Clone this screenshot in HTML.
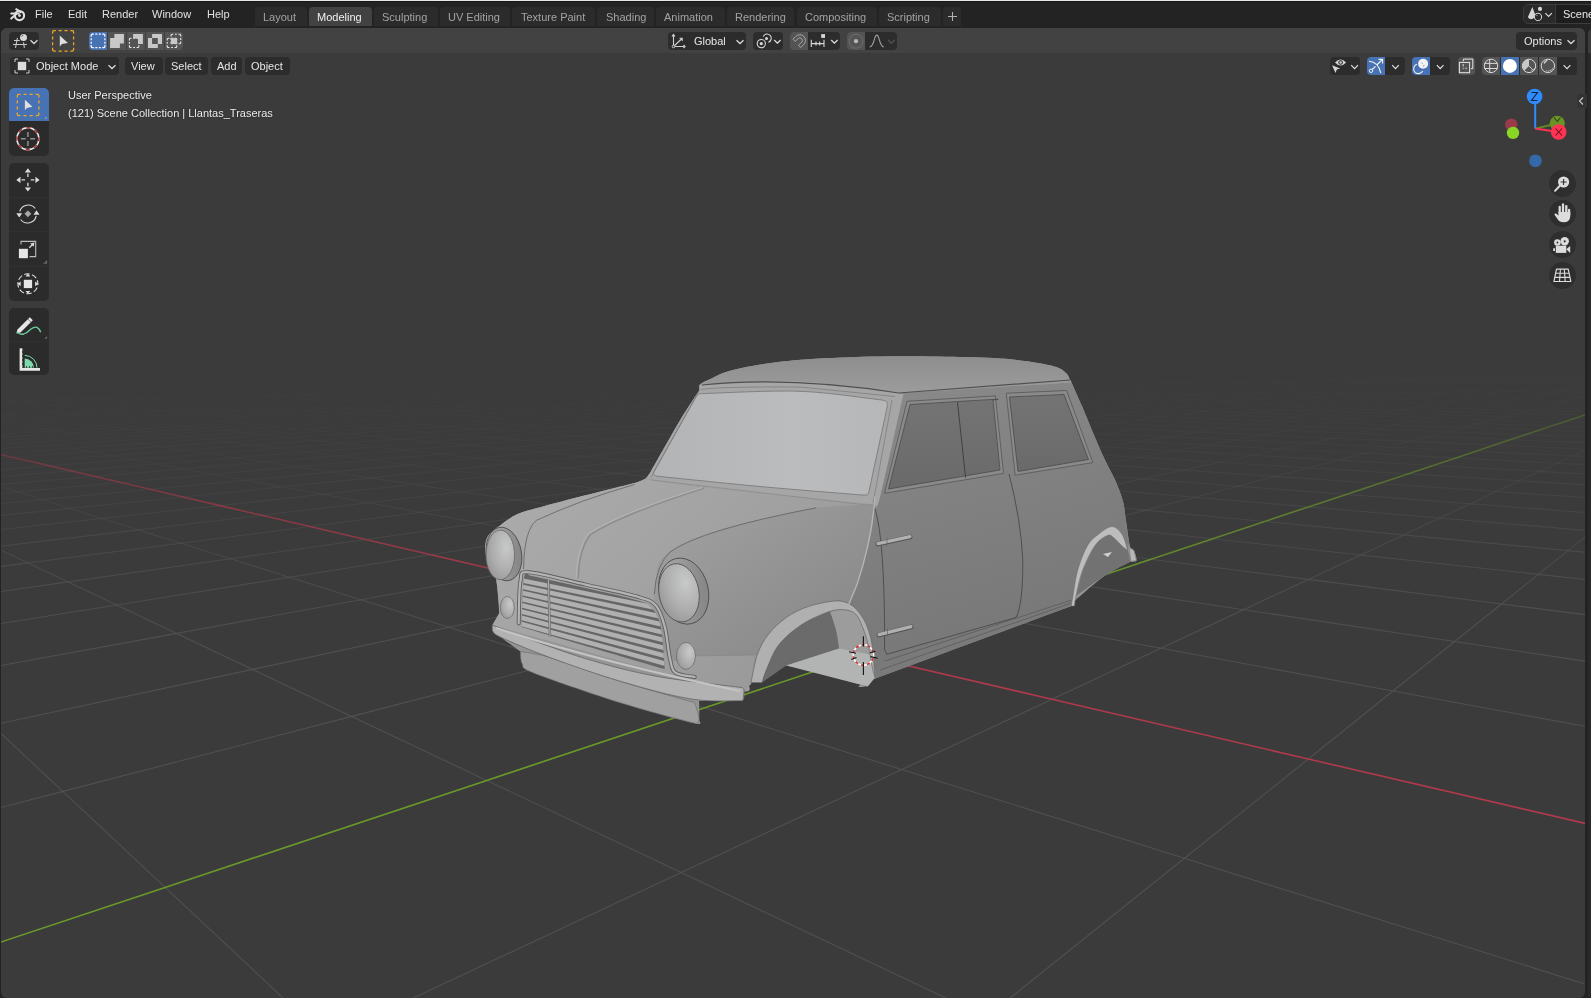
<!DOCTYPE html>
<html><head><meta charset="utf-8"><style>
*{box-sizing:border-box}
html,body{margin:0;padding:0}
body{width:1591px;height:998px;background:#232323;position:relative;overflow:hidden;font-family:"Liberation Sans",sans-serif;font-size:11px;color:#e5e5e5}
.a{position:absolute}
.t{position:absolute;white-space:nowrap;line-height:13px;height:13px;will-change:transform}
.btn{position:absolute;background:#2c2c2c;border-radius:4px}
.tog{position:absolute;background:#545454}
.blue{position:absolute;background:#4772b3}
.tab{position:absolute;top:7px;height:19px;background:#2b2b2b;border-radius:4px 4px 0 0;color:#a3a3a3}
.tab span{position:absolute;top:4px;line-height:13px;white-space:nowrap;will-change:transform}
.tb{position:absolute;left:9px;width:40px;background:#2b2b2b;border-radius:5px}
.nav{position:absolute;width:27px;height:27px;border-radius:50%;background:#2e2e2e}
</style></head><body>
<div class="a" style="left:0;top:0;width:1591px;height:1px;background:#e8e8e8"></div>
<div class="a" style="left:0;top:1px;width:1591px;height:1px;background:#171717"></div>
<svg class="a" style="left:9px;top:6px" width="20" height="18" viewBox="0 0 20 18">
<circle cx="10.5" cy="9.6" r="4.6" stroke="#e0e0e0" stroke-width="2.1" fill="none"/>
<circle cx="10.5" cy="9.6" r="1.4" fill="#e0e0e0"/>
<path d="M2.2 7.4H9.8M7.2 3.2L11.8 6.2M2.2 12.6L7.6 7.8" stroke="#e0e0e0" stroke-width="2" stroke-linecap="round" fill="none"/>
</svg>
<div class="t" style="left:35px;top:7.7px;color:#e0e0e0;">File</div>
<div class="t" style="left:68px;top:7.7px;color:#e0e0e0;">Edit</div>
<div class="t" style="left:102px;top:7.7px;color:#e0e0e0;">Render</div>
<div class="t" style="left:152px;top:7.7px;color:#e0e0e0;">Window</div>
<div class="t" style="left:207px;top:7.7px;color:#e0e0e0;">Help</div>
<div class="tab" style="left:255px;width:52px;"><span style="left:8px">Layout</span></div>
<div class="tab" style="left:309px;width:63px;background:#424242;color:#f0f0f0;"><span style="left:8px">Modeling</span></div>
<div class="tab" style="left:374px;width:64px;"><span style="left:8px">Sculpting</span></div>
<div class="tab" style="left:440px;width:70px;"><span style="left:8px">UV Editing</span></div>
<div class="tab" style="left:512px;width:83px;"><span style="left:8.5px">Texture Paint</span></div>
<div class="tab" style="left:597px;width:57px;"><span style="left:8.5px">Shading</span></div>
<div class="tab" style="left:656px;width:69px;"><span style="left:8px">Animation</span></div>
<div class="tab" style="left:727px;width:67px;"><span style="left:8px">Rendering</span></div>
<div class="tab" style="left:797px;width:80px;"><span style="left:8px">Compositing</span></div>
<div class="tab" style="left:879px;width:62px;"><span style="left:8px">Scripting</span></div>
<div class="tab" style="left:943px;width:18px"></div>
<svg class="a" style="left:946px;top:10px" width="13" height="13" viewBox="0 0 13 13"><path d="M6.5 2V11M2 6.5H11" stroke="#b0b0b0" stroke-width="1.1"/></svg>
<div class="a" style="left:1523.3px;top:4.1px;width:80px;height:19.5px;border:1px solid #3c3c3c;border-radius:5px;background:#2a2a2a"></div>
<div class="a" style="left:1554.5px;top:5.1px;width:40px;height:17.5px;background:#1e1e1e;border-left:1px solid #3c3c3c"></div>
<svg class="a" style="left:1520px;top:0" width="40" height="28" viewBox="1520 0 40 28">
<path d="M1532.4 7L1527.9 17.1Q1528.5 19 1531 19.2Q1533 19.2 1534.2 17.6Q1534.2 16 1535.4 15.2Z" fill="#d4d4d4"/>
<circle cx="1540" cy="8.9" r="2.1" fill="#d4d4d4"/>
<circle cx="1538" cy="16.9" r="3.6" stroke="#d4d4d4" stroke-width="1.05" fill="#2a2a2a"/>
<path d="M1536.4 16L1537.4 15" stroke="#d4d4d4" stroke-width="0.8"/>
<path d="M1545.3 13.2L1548.6 16.5L1551.9 13.2" stroke="#d8d8d8" stroke-width="1.2" fill="none"/>
</svg>
<div class="t" style="left:1562.7px;top:7.7px;color:#e8e8e8;">Scene</div>
<div class="a" style="left:1588px;top:28px;width:10px;height:969px;background:#2a2a2a;border-radius:5px 0 0 0"></div>
<div class="a" style="left:1588px;top:29px;width:10px;height:24px;background:#3d3d3d;border-radius:5px 0 0 0"></div>
<div class="a" style="left:1px;top:28px;width:1584px;height:970px;border-radius:6px;overflow:hidden;background:#3b3b3b">
<svg class="a" style="left:-1px;top:-28px" width="1591" height="998" viewBox="0 0 1591 998">
<path d="M-24.1 398.0L9.5 396.8M-17.5 398.7L16.4 397.4M16.4 397.4L49.2 396.1M23.7 398.0L56.9 396.7M56.9 396.7L88.9 395.5M64.8 397.3L97.2 396.1M97.2 396.1L128.4 394.9M105.8 396.6L137.4 395.4M137.4 395.4L167.9 394.2M146.7 396.0L177.6 394.8M177.6 394.8L207.4 393.6M187.6 395.3L217.7 394.1M228.4 394.7L257.7 393.4M269.1 394.0L297.6 392.8M309.7 393.3L337.5 392.2M350.2 392.7L377.2 391.5M363.4 393.2L390.7 392.0M390.7 392.0L416.9 390.9M404.6 392.5L431.0 391.3M431.0 391.3L456.6 390.2M445.6 391.9L471.3 390.7M471.3 390.7L496.1 389.6M486.6 391.2L511.5 390.0M511.5 390.0L535.5 388.9M527.5 390.5L551.7 389.4M551.7 389.4L574.9 388.3M568.3 389.9L591.7 388.7M591.7 388.7L614.2 387.6M609.1 389.2L631.7 388.1M631.7 388.1L653.5 387.0M649.7 388.5L671.5 387.4M671.5 387.4L692.6 386.4M690.3 387.9L711.3 386.8M711.3 386.8L731.7 385.7M730.8 387.2L751.1 386.1M751.1 386.1L770.7 385.1M771.2 386.5L790.7 385.5M790.7 385.5L809.6 384.5M811.5 385.9L830.3 384.8M830.3 384.8L848.4 383.8M851.7 385.2L869.8 384.2M869.8 384.2L887.2 383.2M891.9 384.6L909.2 383.6M909.2 383.6L925.9 382.6M931.9 383.9L948.5 382.9M971.9 383.3L987.8 382.3M1011.8 382.6L1026.9 381.6M1051.7 382.0L1066.0 381.0M1077.3 382.3L1091.4 381.3M1091.4 381.3L1105.1 380.4M1117.7 381.7L1131.1 380.7M1131.1 380.7L1144.0 379.7M1158.1 381.0L1170.7 380.0M1170.7 380.0L1182.9 379.1M1198.3 380.3L1210.2 379.4M1210.2 379.4L1221.6 378.5M1238.5 379.7L1249.6 378.7M1249.6 378.7L1260.4 377.8M1278.6 379.0L1289.0 378.1M1289.0 378.1L1299.0 377.2M1318.6 378.4L1328.3 377.5M1328.3 377.5L1337.5 376.6M1358.6 377.7L1367.5 376.8M1367.5 376.8L1376.0 375.9M1398.4 377.1L1406.6 376.2M1406.6 376.2L1414.4 375.3M1438.2 376.4L1445.6 375.5M1445.6 375.5L1452.8 374.7M1477.9 375.8L1484.6 374.9M1484.6 374.9L1491.0 374.1M1517.5 375.1L1523.5 374.3M1523.5 374.3L1529.2 373.5M1557.0 374.5L1562.3 373.6M1562.3 373.6L1567.3 372.8M1596.5 373.8L1601.0 373.0M9.5 396.8L16.4 397.4M16.4 397.4L23.7 398.0M49.2 396.1L56.9 396.7M56.9 396.7L64.8 397.3M88.9 395.5L97.2 396.1M97.2 396.1L105.8 396.6M128.4 394.9L137.4 395.4M137.4 395.4L146.7 396.0M167.9 394.2L177.6 394.8M177.6 394.8L187.6 395.3M207.4 393.6L217.7 394.1M217.7 394.1L228.4 394.7M257.7 393.4L269.1 394.0M297.6 392.8L309.7 393.3M337.5 392.2L350.2 392.7M350.2 392.7L363.4 393.2M377.2 391.5L390.7 392.0M390.7 392.0L404.6 392.5M416.9 390.9L431.0 391.3M431.0 391.3L445.6 391.9M456.6 390.2L471.3 390.7M471.3 390.7L486.6 391.2M496.1 389.6L511.5 390.0M511.5 390.0L527.5 390.5M535.5 388.9L551.7 389.4M551.7 389.4L568.3 389.9M574.9 388.3L591.7 388.7M591.7 388.7L609.1 389.2M614.2 387.6L631.7 388.1M631.7 388.1L649.7 388.5M653.5 387.0L671.5 387.4M671.5 387.4L690.3 387.9M692.6 386.4L711.3 386.8M711.3 386.8L730.8 387.2M731.7 385.7L751.1 386.1M751.1 386.1L771.2 386.5M770.7 385.1L790.7 385.5M790.7 385.5L811.5 385.9M809.6 384.5L830.3 384.8M830.3 384.8L851.7 385.2M848.4 383.8L869.8 384.2M869.8 384.2L891.9 384.6M887.2 383.2L909.2 383.6M909.2 383.6L931.9 383.9M948.5 382.9L971.9 383.3M987.8 382.3L1011.8 382.6M1026.9 381.6L1051.7 382.0M1066.0 381.0L1091.4 381.3M1091.4 381.3L1117.7 381.7M1105.1 380.4L1131.1 380.7M1131.1 380.7L1158.1 381.0M1144.0 379.7L1170.7 380.0M1170.7 380.0L1198.3 380.3M1182.9 379.1L1210.2 379.4M1210.2 379.4L1238.5 379.7M1221.6 378.5L1249.6 378.7M1249.6 378.7L1278.6 379.0M1260.4 377.8L1289.0 378.1M1289.0 378.1L1318.6 378.4M1299.0 377.2L1328.3 377.5M1328.3 377.5L1358.6 377.7M1337.5 376.6L1367.5 376.8M1367.5 376.8L1398.4 377.1M1376.0 375.9L1406.6 376.2M1406.6 376.2L1438.2 376.4M1414.4 375.3L1445.6 375.5M1445.6 375.5L1477.9 375.8M1452.8 374.7L1484.6 374.9M1484.6 374.9L1517.5 375.1M1491.0 374.1L1523.5 374.3M1523.5 374.3L1557.0 374.5M1529.2 373.5L1562.3 373.6M1562.3 373.6L1596.5 373.8M1567.3 372.8L1601.0 373.0" stroke="#505050" stroke-opacity="0.00" stroke-width="1.1" fill="none"/>
<path d="M-10.8 399.3L23.7 398.0M-40.1 401.4L-3.8 400.0M-3.8 400.0L31.1 398.6M31.1 398.6L64.8 397.3M-33.4 402.1L3.4 400.7M3.4 400.7L38.9 399.3M38.9 399.3L73.0 397.9M73.0 397.9L105.8 396.6M-26.5 402.9L10.9 401.4M10.9 401.4L46.9 400.0M46.9 400.0L81.4 398.6M81.4 398.6L114.7 397.3M114.7 397.3L146.7 396.0M-19.2 403.7L18.7 402.1M18.7 402.1L55.2 400.7M55.2 400.7L90.2 399.2M90.2 399.2L123.9 397.9M123.9 397.9L156.4 396.6M156.4 396.6L187.6 395.3M-11.7 404.5L26.9 402.9M26.9 402.9L63.9 401.4M63.9 401.4L99.4 399.9M99.4 399.9L133.5 398.5M133.5 398.5L166.4 397.2M166.4 397.2L197.9 395.9M197.9 395.9L228.4 394.7M-44.8 407.1L-3.9 405.4M-3.9 405.4L35.3 403.7M35.3 403.7L72.8 402.2M72.8 402.2L108.9 400.7M108.9 400.7L143.5 399.2M143.5 399.2L176.7 397.8M176.7 397.8L208.7 396.5M208.7 396.5L239.4 395.2M239.4 395.2L269.1 394.0M-37.3 408.0L4.3 406.2M4.3 406.2L44.1 404.6M44.1 404.6L82.2 403.0M82.2 403.0L118.7 401.4M118.7 401.4L153.8 399.9M153.8 399.9L187.5 398.5M187.5 398.5L219.8 397.1M219.8 397.1L250.9 395.8M250.9 395.8L280.8 394.5M280.8 394.5L309.7 393.3M-29.5 409.0L12.8 407.2M12.8 407.2L53.2 405.4M53.2 405.4L91.9 403.8M91.9 403.8L129.0 402.2M129.0 402.2L164.5 400.7M164.5 400.7L198.6 399.2M198.6 399.2L231.3 397.8M231.3 397.8L262.8 396.4M262.8 396.4L293.0 395.1M293.0 395.1L322.2 393.9M322.2 393.9L350.2 392.7M-21.4 410.0L21.7 408.2M21.7 408.2L62.8 406.4M62.8 406.4L102.1 404.6M102.1 404.6L139.7 403.0M139.7 403.0L175.7 401.4M175.7 401.4L210.2 399.9M210.2 399.9L243.3 398.5M243.3 398.5L275.1 397.1M275.1 397.1L305.7 395.7M305.7 395.7L335.1 394.4M335.1 394.4L363.4 393.2M-12.9 411.1L30.9 409.2M30.9 409.2L72.7 407.3M72.7 407.3L112.6 405.5M112.6 405.5L150.8 403.8M150.8 403.8L187.3 402.2M187.3 402.2L222.2 400.6M222.2 400.6L255.8 399.2M255.8 399.2L287.9 397.7M287.9 397.7L318.8 396.3M318.8 396.3L348.5 395.0M348.5 395.0L377.1 393.8M377.1 393.8L404.6 392.5M40.6 410.2L83.1 408.3M83.1 408.3L123.6 406.5M123.6 406.5L162.4 404.7M162.4 404.7L199.4 403.0M199.4 403.0L234.8 401.4M234.8 401.4L268.7 399.9M268.7 399.9L301.2 398.4M301.2 398.4L332.5 397.0M332.5 397.0L362.4 395.6M362.4 395.6L391.2 394.3M391.2 394.3L419.0 393.1M419.0 393.1L445.6 391.9M94.0 409.3L135.2 407.4M135.2 407.4L174.5 405.6M174.5 405.6L212.0 403.9M212.0 403.9L247.9 402.2M247.9 402.2L282.2 400.6M282.2 400.6L315.1 399.1M315.1 399.1L346.6 397.7M346.6 397.7L376.9 396.3M376.9 396.3L405.9 394.9M405.9 394.9L433.9 393.6M433.9 393.6L460.7 392.4M460.7 392.4L486.6 391.2M147.2 408.5L187.1 406.6M187.1 406.6L225.1 404.8M225.1 404.8L261.5 403.1M261.5 403.1L296.2 401.4M296.2 401.4L329.5 399.9M329.5 399.9L361.3 398.4M361.3 398.4L391.9 396.9M391.9 396.9L421.2 395.5M421.2 395.5L449.3 394.2M449.3 394.2L476.4 392.9M476.4 392.9L502.4 391.7M502.4 391.7L527.5 390.5M200.3 407.6L238.9 405.7M238.9 405.7L275.7 404.0M275.7 404.0L310.8 402.3M310.8 402.3L344.5 400.6M344.5 400.6L376.7 399.1M376.7 399.1L407.5 397.6M407.5 397.6L437.0 396.2M437.0 396.2L465.4 394.8M465.4 394.8L492.7 393.5M492.7 393.5L518.9 392.2M518.9 392.2L544.1 391.0M544.1 391.0L568.3 389.9M253.2 406.7L290.5 404.9M290.5 404.9L326.1 403.1M326.1 403.1L360.1 401.4M360.1 401.4L392.6 399.8M392.6 399.8L423.7 398.3M423.7 398.3L453.5 396.8M453.5 396.8L482.1 395.4M482.1 395.4L509.5 394.1M509.5 394.1L535.9 392.8M535.9 392.8L561.2 391.5M561.2 391.5L585.6 390.3M585.6 390.3L609.1 389.2M306.0 405.8L342.0 404.0M342.0 404.0L376.4 402.3M376.4 402.3L409.2 400.6M409.2 400.6L440.6 399.1M440.6 399.1L470.7 397.5M470.7 397.5L499.5 396.1M499.5 396.1L527.1 394.7M527.1 394.7L553.6 393.4M553.6 393.4L579.0 392.1M579.0 392.1L603.5 390.9M603.5 390.9L627.0 389.7M627.0 389.7L649.7 388.5M358.7 405.0L393.4 403.2M393.4 403.2L426.6 401.5M426.6 401.5L458.2 399.8M458.2 399.8L488.5 398.3M488.5 398.3L517.5 396.8M517.5 396.8L545.3 395.3M545.3 395.3L571.9 394.0M571.9 394.0L597.5 392.6M597.5 392.6L622.1 391.4M622.1 391.4L645.7 390.2M645.7 390.2L668.4 389.0M668.4 389.0L690.3 387.9M411.2 404.1L444.7 402.3M444.7 402.3L476.6 400.6M476.6 400.6L507.1 399.0M507.1 399.0L536.3 397.5M536.3 397.5L564.2 396.0M564.2 396.0L591.0 394.6M591.0 394.6L616.7 393.2M616.7 393.2L641.3 391.9M641.3 391.9L665.0 390.7M665.0 390.7L687.8 389.5M687.8 389.5L709.7 388.3M709.7 388.3L730.8 387.2M429.8 405.0L463.6 403.2M463.6 403.2L495.8 401.5M495.8 401.5L526.5 399.8M526.5 399.8L555.9 398.2M555.9 398.2L584.0 396.7M584.0 396.7L610.9 395.2M610.9 395.2L636.6 393.8M636.6 393.8L661.4 392.5M661.4 392.5L685.1 391.2M685.1 391.2L707.9 390.0M707.9 390.0L729.8 388.8M729.8 388.8L750.9 387.6M750.9 387.6L771.2 386.5M483.4 404.1L515.9 402.3M515.9 402.3L546.8 400.6M546.8 400.6L576.3 399.0M576.3 399.0L604.6 397.4M604.6 397.4L631.5 395.9M631.5 395.9L657.4 394.5M657.4 394.5L682.2 393.1M682.2 393.1L705.9 391.8M705.9 391.8L728.7 390.5M728.7 390.5L750.6 389.3M750.6 389.3L771.7 388.1M771.7 388.1L792.0 387.0M792.0 387.0L811.5 385.9M536.8 403.3L568.0 401.5M568.0 401.5L597.7 399.8M597.7 399.8L626.0 398.2M626.0 398.2L653.1 396.6M653.1 396.6L679.0 395.1M679.0 395.1L703.8 393.7M703.8 393.7L727.6 392.3M727.6 392.3L750.4 391.0M750.4 391.0L772.3 389.8M772.3 389.8L793.3 388.6M793.3 388.6L813.5 387.4M813.5 387.4L833.0 386.3M833.0 386.3L851.7 385.2M590.1 402.4L619.9 400.6M619.9 400.6L648.4 398.9M648.4 398.9L675.6 397.3M675.6 397.3L701.5 395.8M701.5 395.8L726.3 394.3M726.3 394.3L750.1 392.9M750.1 392.9L772.9 391.6M772.9 391.6L794.7 390.3M794.7 390.3L815.7 389.1M815.7 389.1L835.9 387.9M835.9 387.9L855.3 386.7M855.3 386.7L873.9 385.6M873.9 385.6L891.9 384.6M643.3 401.5L671.8 399.8M671.8 399.8L699.0 398.1M699.0 398.1L725.0 396.5M725.0 396.5L749.8 395.0M749.8 395.0L773.5 393.6M773.5 393.6L796.3 392.2M796.3 392.2L818.1 390.9M818.1 390.9L839.0 389.6M839.0 389.6L859.1 388.4M859.1 388.4L878.4 387.2M878.4 387.2L896.9 386.1M896.9 386.1L914.8 385.0M914.8 385.0L931.9 383.9M696.3 400.6L723.5 398.9M723.5 398.9L749.5 397.3M749.5 397.3L774.3 395.7M774.3 395.7L798.0 394.2M798.0 394.2L820.7 392.8M820.7 392.8L842.4 391.4M842.4 391.4L863.2 390.1M863.2 390.1L883.2 388.9M883.2 388.9L902.3 387.6M902.3 387.6L920.7 386.5M920.7 386.5L938.5 385.4M938.5 385.4L955.5 384.3M955.5 384.3L971.9 383.3M749.1 399.7L775.1 398.0M775.1 398.0L799.8 396.4M799.8 396.4L823.5 394.9M823.5 394.9L846.0 393.4M846.0 393.4L867.7 392.0M867.7 392.0L888.4 390.7M888.4 390.7L908.2 389.4M908.2 389.4L927.2 388.1M927.2 388.1L945.5 386.9M945.5 386.9L963.1 385.8M963.1 385.8L979.9 384.7M979.9 384.7L996.2 383.6M996.2 383.6L1011.8 382.6M801.8 398.8L826.5 397.2M826.5 397.2L850.0 395.6M850.0 395.6L872.5 394.1M872.5 394.1L894.0 392.6M894.0 392.6L914.5 391.2M914.5 391.2L934.2 389.9M934.2 389.9L953.1 388.6M953.1 388.6L971.2 387.4M971.2 387.4L988.6 386.2M988.6 386.2L1005.3 385.1M1005.3 385.1L1021.3 384.0M1021.3 384.0L1036.8 383.0M1036.8 383.0L1051.7 382.0M854.4 398.0L877.8 396.3M877.8 396.3L900.1 394.8M900.1 394.8L921.5 393.3M921.5 393.3L941.8 391.8M941.8 391.8L961.3 390.5M961.3 390.5L980.0 389.2M980.0 389.2L997.9 387.9M997.9 387.9L1015.1 386.7M1015.1 386.7L1031.5 385.5M1031.5 385.5L1047.4 384.4M1047.4 384.4L1062.6 383.3M1062.6 383.3L1077.3 382.3M906.9 397.1L929.0 395.5M929.0 395.5L950.1 393.9M950.1 393.9L970.3 392.5M970.3 392.5L989.5 391.0M989.5 391.0L1008.0 389.7M1008.0 389.7L1025.6 388.4M1025.6 388.4L1042.6 387.2M1042.6 387.2L1058.8 386.0M1058.8 386.0L1074.4 384.8M1074.4 384.8L1089.4 383.7M1089.4 383.7L1103.8 382.7M1103.8 382.7L1117.7 381.7M959.2 396.2L980.0 394.6M980.0 394.6L999.9 393.1M999.9 393.1L1019.0 391.7M1019.0 391.7L1037.1 390.3M1037.1 390.3L1054.5 388.9M1054.5 388.9L1071.2 387.7M1071.2 387.7L1087.2 386.4M1087.2 386.4L1102.5 385.3M1102.5 385.3L1117.2 384.1M1117.2 384.1L1131.4 383.0M1131.4 383.0L1145.0 382.0M1145.0 382.0L1158.1 381.0M1011.3 395.4L1031.0 393.8M1031.0 393.8L1049.7 392.3M1049.7 392.3L1067.5 390.8M1067.5 390.8L1084.6 389.5M1084.6 389.5L1101.0 388.2M1101.0 388.2L1116.6 386.9M1116.6 386.9L1131.7 385.7M1131.7 385.7L1146.1 384.5M1146.1 384.5L1159.9 383.4M1159.9 383.4L1173.2 382.4M1173.2 382.4L1186.0 381.3M1186.0 381.3L1198.3 380.3M1063.4 394.5L1081.7 392.9M1081.7 392.9L1099.3 391.5M1099.3 391.5L1116.0 390.0M1116.0 390.0L1132.0 388.7M1132.0 388.7L1147.3 387.4M1147.3 387.4L1162.0 386.2M1162.0 386.2L1176.1 385.0M1176.1 385.0L1189.6 383.8M1189.6 383.8L1202.5 382.7M1202.5 382.7L1215.0 381.7M1215.0 381.7L1227.0 380.7M1227.0 380.7L1238.5 379.7M1115.3 393.6L1132.4 392.1M1132.4 392.1L1148.7 390.6M1148.7 390.6L1164.3 389.2M1164.3 389.2L1179.3 387.9M1179.3 387.9L1193.5 386.6M1193.5 386.6L1207.2 385.4M1207.2 385.4L1220.3 384.2M1220.3 384.2L1232.9 383.1M1232.9 383.1L1245.0 382.0M1245.0 382.0L1256.7 381.0M1256.7 381.0L1267.8 380.0M1267.8 380.0L1278.6 379.0M1167.0 392.8L1182.9 391.3M1182.9 391.3L1198.1 389.8M1198.1 389.8L1212.5 388.4M1212.5 388.4L1226.4 387.1M1226.4 387.1L1239.7 385.9M1239.7 385.9L1252.4 384.7M1252.4 384.7L1264.5 383.5M1264.5 383.5L1276.2 382.4M1276.2 382.4L1287.5 381.3M1287.5 381.3L1298.3 380.3M1298.3 380.3L1308.6 379.3M1308.6 379.3L1318.6 378.4M1218.6 391.9L1233.3 390.4M1233.3 390.4L1247.3 389.0M1247.3 389.0L1260.6 387.7M1260.6 387.7L1273.4 386.4M1273.4 386.4L1285.7 385.1M1285.7 385.1L1297.4 383.9M1297.4 383.9L1308.6 382.8M1308.6 382.8L1319.4 381.7M1319.4 381.7L1329.8 380.6M1329.8 380.6L1339.8 379.6M1339.8 379.6L1349.3 378.7M1349.3 378.7L1358.6 377.7M1270.1 391.1L1283.5 389.6M1283.5 389.6L1296.4 388.2M1296.4 388.2L1308.6 386.9M1308.6 386.9L1320.3 385.6M1320.3 385.6L1331.6 384.4M1331.6 384.4L1342.3 383.2M1342.3 383.2L1352.6 382.1M1352.6 382.1L1362.5 381.0M1362.5 381.0L1372.0 379.9M1372.0 379.9L1381.2 379.0M1381.2 379.0L1390.0 378.0M1390.0 378.0L1398.4 377.1M1321.4 390.2L1333.7 388.8M1333.7 388.8L1345.3 387.4M1345.3 387.4L1356.5 386.1M1356.5 386.1L1367.2 384.8M1367.2 384.8L1377.4 383.6M1377.4 383.6L1387.1 382.4M1387.1 382.4L1396.5 381.3M1396.5 381.3L1405.5 380.3M1405.5 380.3L1414.2 379.3M1414.2 379.3L1422.5 378.3M1422.5 378.3L1430.5 377.3M1430.5 377.3L1438.2 376.4M1361.1 390.8L1372.7 389.4M1372.7 389.4L1383.7 387.9M1383.7 387.9L1394.2 386.6M1394.2 386.6L1404.2 385.3M1404.2 385.3L1413.8 384.0M1413.8 384.0L1423.0 382.8M1423.0 382.8L1431.9 381.7M1431.9 381.7L1440.3 380.6M1440.3 380.6L1448.4 379.6M1448.4 379.6L1456.2 378.6M1456.2 378.6L1463.7 377.6M1463.7 377.6L1470.9 376.7M1470.9 376.7L1477.9 375.8M1413.4 390.0L1423.7 388.5M1423.7 388.5L1433.6 387.1M1433.6 387.1L1442.9 385.8M1442.9 385.8L1451.9 384.5M1451.9 384.5L1460.4 383.3M1460.4 383.3L1468.6 382.1M1468.6 382.1L1476.5 381.0M1476.5 381.0L1484.0 379.9M1484.0 379.9L1491.2 378.9M1491.2 378.9L1498.2 377.9M1498.2 377.9L1504.9 376.9M1504.9 376.9L1511.3 376.0M1511.3 376.0L1517.5 375.1M1465.6 389.1L1474.7 387.7M1474.7 387.7L1483.3 386.3M1483.3 386.3L1491.5 385.0M1491.5 385.0L1499.4 383.7M1499.4 383.7L1506.9 382.5M1506.9 382.5L1514.1 381.3M1514.1 381.3L1521.0 380.2M1521.0 380.2L1527.6 379.2M1527.6 379.2L1534.0 378.2M1534.0 378.2L1540.1 377.2M1540.1 377.2L1545.9 376.3M1545.9 376.3L1551.6 375.3M1551.6 375.3L1557.0 374.5M1517.7 388.2L1525.5 386.8M1525.5 386.8L1532.9 385.5M1532.9 385.5L1540.0 384.2M1540.0 384.2L1546.8 382.9M1546.8 382.9L1553.3 381.7M1553.3 381.7L1559.5 380.6M1559.5 380.6L1565.4 379.5M1565.4 379.5L1571.1 378.5M1571.1 378.5L1576.6 377.5M1576.6 377.5L1581.9 376.5M1581.9 376.5L1586.9 375.6M1586.9 375.6L1591.8 374.7M1591.8 374.7L1596.5 373.8M1569.6 387.4L1576.2 386.0M1576.2 386.0L1582.4 384.6M1582.4 384.6L1588.4 383.4M1588.4 383.4L1594.1 382.1M1594.1 382.1L1599.5 381.0M1599.5 381.0L1604.7 379.9M-11.7 404.5L-3.9 405.4M-3.9 405.4L4.3 406.2M4.3 406.2L12.8 407.2M12.8 407.2L21.7 408.2M21.7 408.2L30.9 409.2M30.9 409.2L40.6 410.2M-10.8 399.3L-3.8 400.0M-3.8 400.0L3.4 400.7M3.4 400.7L10.9 401.4M10.9 401.4L18.7 402.1M18.7 402.1L26.9 402.9M26.9 402.9L35.3 403.7M35.3 403.7L44.1 404.6M44.1 404.6L53.2 405.4M53.2 405.4L62.8 406.4M62.8 406.4L72.7 407.3M72.7 407.3L83.1 408.3M83.1 408.3L94.0 409.3M23.7 398.0L31.1 398.6M31.1 398.6L38.9 399.3M38.9 399.3L46.9 400.0M46.9 400.0L55.2 400.7M55.2 400.7L63.9 401.4M63.9 401.4L72.8 402.2M72.8 402.2L82.2 403.0M82.2 403.0L91.9 403.8M91.9 403.8L102.1 404.6M102.1 404.6L112.6 405.5M112.6 405.5L123.6 406.5M123.6 406.5L135.2 407.4M135.2 407.4L147.2 408.5M64.8 397.3L73.0 397.9M73.0 397.9L81.4 398.6M81.4 398.6L90.2 399.2M90.2 399.2L99.4 399.9M99.4 399.9L108.9 400.7M108.9 400.7L118.7 401.4M118.7 401.4L129.0 402.2M129.0 402.2L139.7 403.0M139.7 403.0L150.8 403.8M150.8 403.8L162.4 404.7M162.4 404.7L174.5 405.6M174.5 405.6L187.1 406.6M187.1 406.6L200.3 407.6M105.8 396.6L114.7 397.3M114.7 397.3L123.9 397.9M123.9 397.9L133.5 398.5M133.5 398.5L143.5 399.2M143.5 399.2L153.8 399.9M153.8 399.9L164.5 400.7M164.5 400.7L175.7 401.4M175.7 401.4L187.3 402.2M187.3 402.2L199.4 403.0M199.4 403.0L212.0 403.9M212.0 403.9L225.1 404.8M225.1 404.8L238.9 405.7M238.9 405.7L253.2 406.7M146.7 396.0L156.4 396.6M156.4 396.6L166.4 397.2M166.4 397.2L176.7 397.8M176.7 397.8L187.5 398.5M187.5 398.5L198.6 399.2M198.6 399.2L210.2 399.9M210.2 399.9L222.2 400.6M222.2 400.6L234.8 401.4M234.8 401.4L247.9 402.2M247.9 402.2L261.5 403.1M261.5 403.1L275.7 404.0M275.7 404.0L290.5 404.9M290.5 404.9L306.0 405.8M187.6 395.3L197.9 395.9M197.9 395.9L208.7 396.5M208.7 396.5L219.8 397.1M219.8 397.1L231.3 397.8M231.3 397.8L243.3 398.5M243.3 398.5L255.8 399.2M255.8 399.2L268.7 399.9M268.7 399.9L282.2 400.6M282.2 400.6L296.2 401.4M296.2 401.4L310.8 402.3M310.8 402.3L326.1 403.1M326.1 403.1L342.0 404.0M342.0 404.0L358.7 405.0M228.4 394.7L239.4 395.2M239.4 395.2L250.9 395.8M250.9 395.8L262.8 396.4M262.8 396.4L275.1 397.1M275.1 397.1L287.9 397.7M287.9 397.7L301.2 398.4M301.2 398.4L315.1 399.1M315.1 399.1L329.5 399.9M329.5 399.9L344.5 400.6M344.5 400.6L360.1 401.4M360.1 401.4L376.4 402.3M376.4 402.3L393.4 403.2M393.4 403.2L411.2 404.1M411.2 404.1L429.8 405.0M269.1 394.0L280.8 394.5M280.8 394.5L293.0 395.1M293.0 395.1L305.7 395.7M305.7 395.7L318.8 396.3M318.8 396.3L332.5 397.0M332.5 397.0L346.6 397.7M346.6 397.7L361.3 398.4M361.3 398.4L376.7 399.1M376.7 399.1L392.6 399.8M392.6 399.8L409.2 400.6M409.2 400.6L426.6 401.5M426.6 401.5L444.7 402.3M444.7 402.3L463.6 403.2M463.6 403.2L483.4 404.1M309.7 393.3L322.2 393.9M322.2 393.9L335.1 394.4M335.1 394.4L348.5 395.0M348.5 395.0L362.4 395.6M362.4 395.6L376.9 396.3M376.9 396.3L391.9 396.9M391.9 396.9L407.5 397.6M407.5 397.6L423.7 398.3M423.7 398.3L440.6 399.1M440.6 399.1L458.2 399.8M458.2 399.8L476.6 400.6M476.6 400.6L495.8 401.5M495.8 401.5L515.9 402.3M515.9 402.3L536.8 403.3M363.4 393.2L377.1 393.8M377.1 393.8L391.2 394.3M391.2 394.3L405.9 394.9M405.9 394.9L421.2 395.5M421.2 395.5L437.0 396.2M437.0 396.2L453.5 396.8M453.5 396.8L470.7 397.5M470.7 397.5L488.5 398.3M488.5 398.3L507.1 399.0M507.1 399.0L526.5 399.8M526.5 399.8L546.8 400.6M546.8 400.6L568.0 401.5M568.0 401.5L590.1 402.4M404.6 392.5L419.0 393.1M419.0 393.1L433.9 393.6M433.9 393.6L449.3 394.2M449.3 394.2L465.4 394.8M465.4 394.8L482.1 395.4M482.1 395.4L499.5 396.1M499.5 396.1L517.5 396.8M517.5 396.8L536.3 397.5M536.3 397.5L555.9 398.2M555.9 398.2L576.3 399.0M576.3 399.0L597.7 399.8M597.7 399.8L619.9 400.6M619.9 400.6L643.3 401.5M445.6 391.9L460.7 392.4M460.7 392.4L476.4 392.9M476.4 392.9L492.7 393.5M492.7 393.5L509.5 394.1M509.5 394.1L527.1 394.7M527.1 394.7L545.3 395.3M545.3 395.3L564.2 396.0M564.2 396.0L584.0 396.7M584.0 396.7L604.6 397.4M604.6 397.4L626.0 398.2M626.0 398.2L648.4 398.9M648.4 398.9L671.8 399.8M671.8 399.8L696.3 400.6M486.6 391.2L502.4 391.7M502.4 391.7L518.9 392.2M518.9 392.2L535.9 392.8M535.9 392.8L553.6 393.4M553.6 393.4L571.9 394.0M571.9 394.0L591.0 394.6M591.0 394.6L610.9 395.2M610.9 395.2L631.5 395.9M631.5 395.9L653.1 396.6M653.1 396.6L675.6 397.3M675.6 397.3L699.0 398.1M699.0 398.1L723.5 398.9M723.5 398.9L749.1 399.7M527.5 390.5L544.1 391.0M544.1 391.0L561.2 391.5M561.2 391.5L579.0 392.1M579.0 392.1L597.5 392.6M597.5 392.6L616.7 393.2M616.7 393.2L636.6 393.8M636.6 393.8L657.4 394.5M657.4 394.5L679.0 395.1M679.0 395.1L701.5 395.8M701.5 395.8L725.0 396.5M725.0 396.5L749.5 397.3M749.5 397.3L775.1 398.0M775.1 398.0L801.8 398.8M568.3 389.9L585.6 390.3M585.6 390.3L603.5 390.9M603.5 390.9L622.1 391.4M622.1 391.4L641.3 391.9M641.3 391.9L661.4 392.5M661.4 392.5L682.2 393.1M682.2 393.1L703.8 393.7M703.8 393.7L726.3 394.3M726.3 394.3L749.8 395.0M749.8 395.0L774.3 395.7M774.3 395.7L799.8 396.4M799.8 396.4L826.5 397.2M826.5 397.2L854.4 398.0M609.1 389.2L627.0 389.7M627.0 389.7L645.7 390.2M645.7 390.2L665.0 390.7M665.0 390.7L685.1 391.2M685.1 391.2L705.9 391.8M705.9 391.8L727.6 392.3M727.6 392.3L750.1 392.9M750.1 392.9L773.5 393.6M773.5 393.6L798.0 394.2M798.0 394.2L823.5 394.9M823.5 394.9L850.0 395.6M850.0 395.6L877.8 396.3M877.8 396.3L906.9 397.1M649.7 388.5L668.4 389.0M668.4 389.0L687.8 389.5M687.8 389.5L707.9 390.0M707.9 390.0L728.7 390.5M728.7 390.5L750.4 391.0M750.4 391.0L772.9 391.6M772.9 391.6L796.3 392.2M796.3 392.2L820.7 392.8M820.7 392.8L846.0 393.4M846.0 393.4L872.5 394.1M872.5 394.1L900.1 394.8M900.1 394.8L929.0 395.5M929.0 395.5L959.2 396.2M690.3 387.9L709.7 388.3M709.7 388.3L729.8 388.8M729.8 388.8L750.6 389.3M750.6 389.3L772.3 389.8M772.3 389.8L794.7 390.3M794.7 390.3L818.1 390.9M818.1 390.9L842.4 391.4M842.4 391.4L867.7 392.0M867.7 392.0L894.0 392.6M894.0 392.6L921.5 393.3M921.5 393.3L950.1 393.9M950.1 393.9L980.0 394.6M980.0 394.6L1011.3 395.4M730.8 387.2L750.9 387.6M750.9 387.6L771.7 388.1M771.7 388.1L793.3 388.6M793.3 388.6L815.7 389.1M815.7 389.1L839.0 389.6M839.0 389.6L863.2 390.1M863.2 390.1L888.4 390.7M888.4 390.7L914.5 391.2M914.5 391.2L941.8 391.8M941.8 391.8L970.3 392.5M970.3 392.5L999.9 393.1M999.9 393.1L1031.0 393.8M1031.0 393.8L1063.4 394.5M771.2 386.5L792.0 387.0M792.0 387.0L813.5 387.4M813.5 387.4L835.9 387.9M835.9 387.9L859.1 388.4M859.1 388.4L883.2 388.9M883.2 388.9L908.2 389.4M908.2 389.4L934.2 389.9M934.2 389.9L961.3 390.5M961.3 390.5L989.5 391.0M989.5 391.0L1019.0 391.7M1019.0 391.7L1049.7 392.3M1049.7 392.3L1081.7 392.9M1081.7 392.9L1115.3 393.6M811.5 385.9L833.0 386.3M833.0 386.3L855.3 386.7M855.3 386.7L878.4 387.2M878.4 387.2L902.3 387.6M902.3 387.6L927.2 388.1M927.2 388.1L953.1 388.6M953.1 388.6L980.0 389.2M980.0 389.2L1008.0 389.7M1008.0 389.7L1037.1 390.3M1037.1 390.3L1067.5 390.8M1067.5 390.8L1099.3 391.5M1099.3 391.5L1132.4 392.1M1132.4 392.1L1167.0 392.8M851.7 385.2L873.9 385.6M873.9 385.6L896.9 386.1M896.9 386.1L920.7 386.5M920.7 386.5L945.5 386.9M945.5 386.9L971.2 387.4M971.2 387.4L997.9 387.9M997.9 387.9L1025.6 388.4M1025.6 388.4L1054.5 388.9M1054.5 388.9L1084.6 389.5M1084.6 389.5L1116.0 390.0M1116.0 390.0L1148.7 390.6M1148.7 390.6L1182.9 391.3M1182.9 391.3L1218.6 391.9M891.9 384.6L914.8 385.0M914.8 385.0L938.5 385.4M938.5 385.4L963.1 385.8M963.1 385.8L988.6 386.2M988.6 386.2L1015.1 386.7M1015.1 386.7L1042.6 387.2M1042.6 387.2L1071.2 387.7M1071.2 387.7L1101.0 388.2M1101.0 388.2L1132.0 388.7M1132.0 388.7L1164.3 389.2M1164.3 389.2L1198.1 389.8M1198.1 389.8L1233.3 390.4M1233.3 390.4L1270.1 391.1M931.9 383.9L955.5 384.3M955.5 384.3L979.9 384.7M979.9 384.7L1005.3 385.1M1005.3 385.1L1031.5 385.5M1031.5 385.5L1058.8 386.0M1058.8 386.0L1087.2 386.4M1087.2 386.4L1116.6 386.9M1116.6 386.9L1147.3 387.4M1147.3 387.4L1179.3 387.9M1179.3 387.9L1212.5 388.4M1212.5 388.4L1247.3 389.0M1247.3 389.0L1283.5 389.6M1283.5 389.6L1321.4 390.2M971.9 383.3L996.2 383.6M996.2 383.6L1021.3 384.0M1021.3 384.0L1047.4 384.4M1047.4 384.4L1074.4 384.8M1074.4 384.8L1102.5 385.3M1102.5 385.3L1131.7 385.7M1131.7 385.7L1162.0 386.2M1162.0 386.2L1193.5 386.6M1193.5 386.6L1226.4 387.1M1226.4 387.1L1260.6 387.7M1260.6 387.7L1296.4 388.2M1296.4 388.2L1333.7 388.8M1333.7 388.8L1372.7 389.4M1372.7 389.4L1413.4 390.0M1011.8 382.6L1036.8 383.0M1036.8 383.0L1062.6 383.3M1062.6 383.3L1089.4 383.7M1089.4 383.7L1117.2 384.1M1117.2 384.1L1146.1 384.5M1146.1 384.5L1176.1 385.0M1176.1 385.0L1207.2 385.4M1207.2 385.4L1239.7 385.9M1239.7 385.9L1273.4 386.4M1273.4 386.4L1308.6 386.9M1308.6 386.9L1345.3 387.4M1345.3 387.4L1383.7 387.9M1383.7 387.9L1423.7 388.5M1423.7 388.5L1465.6 389.1M1051.7 382.0L1077.3 382.3M1077.3 382.3L1103.8 382.7M1103.8 382.7L1131.4 383.0M1131.4 383.0L1159.9 383.4M1159.9 383.4L1189.6 383.8M1189.6 383.8L1220.3 384.2M1220.3 384.2L1252.4 384.7M1252.4 384.7L1285.7 385.1M1285.7 385.1L1320.3 385.6M1320.3 385.6L1356.5 386.1M1356.5 386.1L1394.2 386.6M1394.2 386.6L1433.6 387.1M1433.6 387.1L1474.7 387.7M1474.7 387.7L1517.7 388.2M1117.7 381.7L1145.0 382.0M1145.0 382.0L1173.2 382.4M1173.2 382.4L1202.5 382.7M1202.5 382.7L1232.9 383.1M1232.9 383.1L1264.5 383.5M1264.5 383.5L1297.4 383.9M1297.4 383.9L1331.6 384.4M1331.6 384.4L1367.2 384.8M1367.2 384.8L1404.2 385.3M1404.2 385.3L1442.9 385.8M1442.9 385.8L1483.3 386.3M1483.3 386.3L1525.5 386.8M1525.5 386.8L1569.6 387.4M1158.1 381.0L1186.0 381.3M1186.0 381.3L1215.0 381.7M1215.0 381.7L1245.0 382.0M1245.0 382.0L1276.2 382.4M1276.2 382.4L1308.6 382.8M1308.6 382.8L1342.3 383.2M1342.3 383.2L1377.4 383.6M1377.4 383.6L1413.8 384.0M1413.8 384.0L1451.9 384.5M1451.9 384.5L1491.5 385.0M1491.5 385.0L1532.9 385.5M1532.9 385.5L1576.2 386.0M1576.2 386.0L1621.4 386.5M1198.3 380.3L1227.0 380.7M1227.0 380.7L1256.7 381.0M1256.7 381.0L1287.5 381.3M1287.5 381.3L1319.4 381.7M1319.4 381.7L1352.6 382.1M1352.6 382.1L1387.1 382.4M1387.1 382.4L1423.0 382.8M1423.0 382.8L1460.4 383.3M1460.4 383.3L1499.4 383.7M1499.4 383.7L1540.0 384.2M1540.0 384.2L1582.4 384.6M1582.4 384.6L1626.7 385.1M1238.5 379.7L1267.8 380.0M1267.8 380.0L1298.3 380.3M1298.3 380.3L1329.8 380.6M1329.8 380.6L1362.5 381.0M1362.5 381.0L1396.5 381.3M1396.5 381.3L1431.9 381.7M1431.9 381.7L1468.6 382.1M1468.6 382.1L1506.9 382.5M1506.9 382.5L1546.8 382.9M1546.8 382.9L1588.4 383.4M1588.4 383.4L1631.8 383.8M1278.6 379.0L1308.6 379.3M1308.6 379.3L1339.8 379.6M1339.8 379.6L1372.0 379.9M1372.0 379.9L1405.5 380.3M1405.5 380.3L1440.3 380.6M1440.3 380.6L1476.5 381.0M1476.5 381.0L1514.1 381.3M1514.1 381.3L1553.3 381.7M1553.3 381.7L1594.1 382.1M1594.1 382.1L1636.6 382.6M1318.6 378.4L1349.3 378.7M1349.3 378.7L1381.2 379.0M1381.2 379.0L1414.2 379.3M1414.2 379.3L1448.4 379.6M1448.4 379.6L1484.0 379.9M1484.0 379.9L1521.0 380.2M1521.0 380.2L1559.5 380.6M1559.5 380.6L1599.5 381.0M1599.5 381.0L1641.2 381.4M1358.6 377.7L1390.0 378.0M1390.0 378.0L1422.5 378.3M1422.5 378.3L1456.2 378.6M1456.2 378.6L1491.2 378.9M1491.2 378.9L1527.6 379.2M1527.6 379.2L1565.4 379.5M1565.4 379.5L1604.7 379.9M1398.4 377.1L1430.5 377.3M1430.5 377.3L1463.7 377.6M1463.7 377.6L1498.2 377.9M1498.2 377.9L1534.0 378.2M1534.0 378.2L1571.1 378.5M1571.1 378.5L1609.7 378.8M1438.2 376.4L1470.9 376.7M1470.9 376.7L1504.9 376.9M1504.9 376.9L1540.1 377.2M1540.1 377.2L1576.6 377.5M1576.6 377.5L1614.5 377.8M1477.9 375.8L1511.3 376.0M1511.3 376.0L1545.9 376.3M1545.9 376.3L1581.9 376.5M1581.9 376.5L1619.1 376.8M1517.5 375.1L1551.6 375.3M1551.6 375.3L1586.9 375.6M1586.9 375.6L1623.6 375.8M1557.0 374.5L1591.8 374.7M1591.8 374.7L1627.8 374.9M1596.5 373.8L1631.9 374.0" stroke="#505050" stroke-opacity="0.05" stroke-width="1.1" fill="none"/>
<path d="M-50.8 414.4L-4.0 412.3M-4.0 412.3L40.6 410.2M-42.4 415.7L5.4 413.4M5.4 413.4L50.8 411.3M50.8 411.3L94.0 409.3M-33.5 417.0L15.2 414.7M15.2 414.7L61.4 412.5M61.4 412.5L105.4 410.4M105.4 410.4L147.2 408.5M-24.2 418.4L25.4 416.0M25.4 416.0L72.5 413.7M72.5 413.7L117.3 411.6M117.3 411.6L159.8 409.5M159.8 409.5L200.3 407.6M-14.4 419.9L36.3 417.4M36.3 417.4L84.3 415.0M84.3 415.0L129.8 412.8M129.8 412.8L173.0 410.7M173.0 410.7L214.1 408.6M214.1 408.6L253.2 406.7M-58.9 424.2L-4.1 421.4M-4.1 421.4L47.7 418.8M47.7 418.8L96.6 416.4M96.6 416.4L142.9 414.0M142.9 414.0L186.8 411.8M186.8 411.8L228.6 409.7M228.6 409.7L268.2 407.7M268.2 407.7L306.0 405.8M-49.2 426.0L6.8 423.1M6.8 423.1L59.7 420.4M59.7 420.4L109.5 417.8M109.5 417.8L156.7 415.4M156.7 415.4L201.4 413.1M201.4 413.1L243.7 410.9M243.7 410.9L284.0 408.8M284.0 408.8L322.3 406.8M322.3 406.8L358.7 405.0M-39.0 427.9L18.4 424.8M18.4 424.8L72.3 422.0M72.3 422.0L123.2 419.3M123.2 419.3L171.2 416.8M171.2 416.8L216.7 414.4M216.7 414.4L259.7 412.1M259.7 412.1L300.5 409.9M300.5 409.9L339.3 407.9M339.3 407.9L376.1 405.9M376.1 405.9L411.2 404.1M-28.1 429.8L30.6 426.7M30.6 426.7L85.7 423.7M85.7 423.7L137.6 420.9M137.6 420.9L186.5 418.2M186.5 418.2L232.7 415.7M232.7 415.7L276.4 413.3M276.4 413.3L317.8 411.1M317.8 411.1L357.1 409.0M357.1 409.0L394.4 407.0M394.4 407.0L429.8 405.0M43.6 428.6L99.9 425.5M99.9 425.5L152.9 422.5M152.9 422.5L202.7 419.8M202.7 419.8L249.7 417.2M249.7 417.2L294.1 414.7M294.1 414.7L336.0 412.3M336.0 412.3L375.8 410.1M375.8 410.1L413.5 408.0M413.5 408.0L449.3 406.0M449.3 406.0L483.4 404.1M115.0 427.4L169.0 424.3M169.0 424.3L219.8 421.4M219.8 421.4L267.6 418.7M267.6 418.7L312.6 416.1M312.6 416.1L355.2 413.7M355.2 413.7L395.4 411.4M395.4 411.4L433.6 409.2M433.6 409.2L469.8 407.1M469.8 407.1L504.1 405.1M504.1 405.1L536.8 403.3M186.2 426.2L237.9 423.1M237.9 423.1L286.5 420.3M286.5 420.3L332.3 417.6M332.3 417.6L375.4 415.0M375.4 415.0L416.1 412.6M416.1 412.6L454.7 410.4M454.7 410.4L491.2 408.2M491.2 408.2L525.9 406.2M525.9 406.2L558.8 404.2M558.8 404.2L590.1 402.4M257.1 425.0L306.5 422.0M306.5 422.0L353.0 419.1M353.0 419.1L396.7 416.5M396.7 416.5L438.0 414.0M438.0 414.0L476.9 411.6M476.9 411.6L513.8 409.4M513.8 409.4L548.7 407.2M548.7 407.2L581.8 405.2M581.8 405.2L613.3 403.3M613.3 403.3L643.3 401.5M277.5 426.9L327.8 423.8M327.8 423.8L374.9 420.8M374.9 420.8L419.3 418.0M419.3 418.0L461.0 415.4M461.0 415.4L500.3 412.9M500.3 412.9L537.5 410.6M537.5 410.6L572.7 408.4M572.7 408.4L606.0 406.3M606.0 406.3L637.6 404.3M637.6 404.3L667.7 402.4M667.7 402.4L696.3 400.6M350.4 425.7L398.2 422.6M398.2 422.6L443.1 419.7M443.1 419.7L485.3 416.9M485.3 416.9L525.0 414.3M525.0 414.3L562.5 411.9M562.5 411.9L597.9 409.6M597.9 409.6L631.4 407.4M631.4 407.4L663.1 405.3M663.1 405.3L693.3 403.4M693.3 403.4L721.9 401.5M721.9 401.5L749.1 399.7M423.0 424.4L468.4 421.4M468.4 421.4L511.0 418.5M511.0 418.5L551.1 415.8M551.1 415.8L588.9 413.2M588.9 413.2L624.5 410.8M624.5 410.8L658.1 408.6M658.1 408.6L689.9 406.4M689.9 406.4L720.1 404.4M720.1 404.4L748.7 402.4M748.7 402.4L775.9 400.6M775.9 400.6L801.8 398.8M495.3 423.2L538.3 420.2M538.3 420.2L578.7 417.3M578.7 417.3L616.7 414.7M616.7 414.7L652.5 412.2M652.5 412.2L686.2 409.8M686.2 409.8L718.1 407.6M718.1 407.6L748.3 405.4M748.3 405.4L776.9 403.4M776.9 403.4L804.1 401.5M804.1 401.5L829.9 399.7M829.9 399.7L854.4 398.0M567.3 422.0L608.0 419.0M608.0 419.0L646.2 416.2M646.2 416.2L682.1 413.6M682.1 413.6L715.9 411.1M715.9 411.1L747.8 408.8M747.8 408.8L778.0 406.5M778.0 406.5L806.5 404.5M806.5 404.5L833.6 402.5M833.6 402.5L859.2 400.6M859.2 400.6L883.6 398.8M883.6 398.8L906.9 397.1M639.1 420.7L677.5 417.8M677.5 417.8L713.5 415.1M713.5 415.1L747.3 412.5M747.3 412.5L779.2 410.0M779.2 410.0L809.2 407.7M809.2 407.7L837.6 405.5M837.6 405.5L864.5 403.5M864.5 403.5L890.0 401.5M890.0 401.5L914.3 399.7M914.3 399.7L937.3 397.9M937.3 397.9L959.2 396.2M710.7 419.5L746.7 416.6M746.7 416.6L780.5 413.9M780.5 413.9L812.3 411.4M812.3 411.4L842.2 409.0M842.2 409.0L870.4 406.7M870.4 406.7L897.1 404.5M897.1 404.5L922.4 402.5M922.4 402.5L946.4 400.6M946.4 400.6L969.1 398.8M969.1 398.8L990.7 397.0M990.7 397.0L1011.3 395.4M782.0 418.3L815.7 415.5M815.7 415.5L847.3 412.8M847.3 412.8L877.0 410.3M877.0 410.3L905.0 407.9M905.0 407.9L931.5 405.7M931.5 405.7L956.4 403.5M956.4 403.5L980.1 401.5M980.1 401.5L1002.5 399.6M1002.5 399.6L1023.8 397.8M1023.8 397.8L1044.1 396.1M1044.1 396.1L1063.4 394.5M853.0 417.1L884.4 414.3M884.4 414.3L913.9 411.6M913.9 411.6L941.6 409.2M941.6 409.2L967.7 406.8M967.7 406.8L992.3 404.6M992.3 404.6L1015.6 402.5M1015.6 402.5L1037.6 400.6M1037.6 400.6L1058.5 398.7M1058.5 398.7L1078.4 396.9M1078.4 396.9L1097.3 395.2M1097.3 395.2L1115.3 393.6M923.8 415.9L952.9 413.1M952.9 413.1L980.2 410.5M980.2 410.5L1005.9 408.1M1005.9 408.1L1030.1 405.8M1030.1 405.8L1052.9 403.6M1052.9 403.6L1074.5 401.6M1074.5 401.6L1095.0 399.6M1095.0 399.6L1114.4 397.8M1114.4 397.8L1132.8 396.0M1132.8 396.0L1150.3 394.4M1150.3 394.4L1167.0 392.8M994.3 414.7L1021.1 411.9M1021.1 411.9L1046.3 409.4M1046.3 409.4L1070.0 407.0M1070.0 407.0L1092.3 404.7M1092.3 404.7L1113.4 402.6M1113.4 402.6L1133.3 400.6M1133.3 400.6L1152.2 398.7M1152.2 398.7L1170.1 396.8M1170.1 396.8L1187.1 395.1M1187.1 395.1L1203.2 393.5M1203.2 393.5L1218.6 391.9M1064.6 413.5L1089.2 410.8M1089.2 410.8L1112.2 408.3M1112.2 408.3L1133.9 405.9M1133.9 405.9L1154.4 403.7M1154.4 403.7L1173.7 401.6M1173.7 401.6L1191.9 399.6M1191.9 399.6L1209.2 397.7M1209.2 397.7L1225.6 395.9M1225.6 395.9L1241.2 394.2M1241.2 394.2L1256.0 392.6M1256.0 392.6L1270.1 391.1M1134.6 412.3L1156.9 409.6M1156.9 409.6L1177.9 407.2M1177.9 407.2L1197.6 404.8M1197.6 404.8L1216.2 402.6M1216.2 402.6L1233.8 400.6M1233.8 400.6L1250.4 398.6M1250.4 398.6L1266.1 396.7M1266.1 396.7L1281.0 395.0M1281.0 395.0L1295.2 393.3M1295.2 393.3L1308.6 391.7M1308.6 391.7L1321.4 390.2M1204.4 411.1L1224.5 408.5M1224.5 408.5L1243.4 406.0M1243.4 406.0L1261.1 403.7M1261.1 403.7L1277.9 401.6M1277.9 401.6L1293.7 399.5M1293.7 399.5L1308.6 397.6M1308.6 397.6L1322.8 395.8M1322.8 395.8L1336.2 394.1M1336.2 394.1L1349.0 392.4M1349.0 392.4L1361.1 390.8M1273.9 409.9L1291.8 407.3M1291.8 407.3L1308.6 404.9M1308.6 404.9L1324.4 402.7M1324.4 402.7L1339.3 400.5M1339.3 400.5L1353.4 398.5M1353.4 398.5L1366.7 396.6M1366.7 396.6L1379.3 394.8M1379.3 394.8L1391.3 393.1M1391.3 393.1L1402.6 391.5M1402.6 391.5L1413.4 390.0M1343.2 408.7L1358.9 406.2M1358.9 406.2L1373.6 403.8M1373.6 403.8L1387.5 401.6M1387.5 401.6L1400.6 399.5M1400.6 399.5L1412.9 397.5M1412.9 397.5L1424.6 395.7M1424.6 395.7L1435.7 393.9M1435.7 393.9L1446.2 392.2M1446.2 392.2L1456.2 390.6M1456.2 390.6L1465.6 389.1M1412.3 407.5L1425.8 405.0M1425.8 405.0L1438.5 402.7M1438.5 402.7L1450.4 400.5M1450.4 400.5L1461.7 398.5M1461.7 398.5L1472.3 396.5M1472.3 396.5L1482.4 394.7M1482.4 394.7L1491.9 393.0M1491.9 393.0L1500.9 391.3M1500.9 391.3L1509.5 389.7M1509.5 389.7L1517.7 388.2M1481.1 406.3L1492.4 403.9M1492.4 403.9L1503.0 401.6M1503.0 401.6L1513.1 399.5M1513.1 399.5L1522.5 397.5M1522.5 397.5L1531.5 395.5M1531.5 395.5L1539.9 393.7M1539.9 393.7L1547.9 392.0M1547.9 392.0L1555.5 390.4M1555.5 390.4L1562.8 388.8M1562.8 388.8L1569.6 387.4M1539.8 407.7L1549.6 405.2M1549.6 405.2L1558.8 402.8M1558.8 402.8L1567.4 400.5M1567.4 400.5L1575.6 398.4M1575.6 398.4L1583.2 396.4M1583.2 396.4L1590.5 394.5M1590.5 394.5L1597.3 392.8M1597.3 392.8L1603.8 391.1M-14.4 419.9L-4.1 421.4M-4.1 421.4L6.8 423.1M6.8 423.1L18.4 424.8M18.4 424.8L30.6 426.7M30.6 426.7L43.6 428.6M-12.9 411.1L-4.0 412.3M-4.0 412.3L5.4 413.4M5.4 413.4L15.2 414.7M15.2 414.7L25.4 416.0M25.4 416.0L36.3 417.4M36.3 417.4L47.7 418.8M47.7 418.8L59.7 420.4M59.7 420.4L72.3 422.0M72.3 422.0L85.7 423.7M85.7 423.7L99.9 425.5M99.9 425.5L115.0 427.4M40.6 410.2L50.8 411.3M50.8 411.3L61.4 412.5M61.4 412.5L72.5 413.7M72.5 413.7L84.3 415.0M84.3 415.0L96.6 416.4M96.6 416.4L109.5 417.8M109.5 417.8L123.2 419.3M123.2 419.3L137.6 420.9M137.6 420.9L152.9 422.5M152.9 422.5L169.0 424.3M169.0 424.3L186.2 426.2M94.0 409.3L105.4 410.4M105.4 410.4L117.3 411.6M117.3 411.6L129.8 412.8M129.8 412.8L142.9 414.0M142.9 414.0L156.7 415.4M156.7 415.4L171.2 416.8M171.2 416.8L186.5 418.2M186.5 418.2L202.7 419.8M202.7 419.8L219.8 421.4M219.8 421.4L237.9 423.1M237.9 423.1L257.1 425.0M257.1 425.0L277.5 426.9M147.2 408.5L159.8 409.5M159.8 409.5L173.0 410.7M173.0 410.7L186.8 411.8M186.8 411.8L201.4 413.1M201.4 413.1L216.7 414.4M216.7 414.4L232.7 415.7M232.7 415.7L249.7 417.2M249.7 417.2L267.6 418.7M267.6 418.7L286.5 420.3M286.5 420.3L306.5 422.0M306.5 422.0L327.8 423.8M327.8 423.8L350.4 425.7M200.3 407.6L214.1 408.6M214.1 408.6L228.6 409.7M228.6 409.7L243.7 410.9M243.7 410.9L259.7 412.1M259.7 412.1L276.4 413.3M276.4 413.3L294.1 414.7M294.1 414.7L312.6 416.1M312.6 416.1L332.3 417.6M332.3 417.6L353.0 419.1M353.0 419.1L374.9 420.8M374.9 420.8L398.2 422.6M398.2 422.6L423.0 424.4M253.2 406.7L268.2 407.7M268.2 407.7L284.0 408.8M284.0 408.8L300.5 409.9M300.5 409.9L317.8 411.1M317.8 411.1L336.0 412.3M336.0 412.3L355.2 413.7M355.2 413.7L375.4 415.0M375.4 415.0L396.7 416.5M396.7 416.5L419.3 418.0M419.3 418.0L443.1 419.7M443.1 419.7L468.4 421.4M468.4 421.4L495.3 423.2M306.0 405.8L322.3 406.8M322.3 406.8L339.3 407.9M339.3 407.9L357.1 409.0M357.1 409.0L375.8 410.1M375.8 410.1L395.4 411.4M395.4 411.4L416.1 412.6M416.1 412.6L438.0 414.0M438.0 414.0L461.0 415.4M461.0 415.4L485.3 416.9M485.3 416.9L511.0 418.5M511.0 418.5L538.3 420.2M538.3 420.2L567.3 422.0M358.7 405.0L376.1 405.9M376.1 405.9L394.4 407.0M394.4 407.0L413.5 408.0M413.5 408.0L433.6 409.2M433.6 409.2L454.7 410.4M454.7 410.4L476.9 411.6M476.9 411.6L500.3 412.9M500.3 412.9L525.0 414.3M525.0 414.3L551.1 415.8M551.1 415.8L578.7 417.3M578.7 417.3L608.0 419.0M608.0 419.0L639.1 420.7M429.8 405.0L449.3 406.0M449.3 406.0L469.8 407.1M469.8 407.1L491.2 408.2M491.2 408.2L513.8 409.4M513.8 409.4L537.5 410.6M537.5 410.6L562.5 411.9M562.5 411.9L588.9 413.2M588.9 413.2L616.7 414.7M616.7 414.7L646.2 416.2M646.2 416.2L677.5 417.8M677.5 417.8L710.7 419.5M483.4 404.1L504.1 405.1M504.1 405.1L525.9 406.2M525.9 406.2L548.7 407.2M548.7 407.2L572.7 408.4M572.7 408.4L597.9 409.6M597.9 409.6L624.5 410.8M624.5 410.8L652.5 412.2M652.5 412.2L682.1 413.6M682.1 413.6L713.5 415.1M713.5 415.1L746.7 416.6M746.7 416.6L782.0 418.3M536.8 403.3L558.8 404.2M558.8 404.2L581.8 405.2M581.8 405.2L606.0 406.3M606.0 406.3L631.4 407.4M631.4 407.4L658.1 408.6M658.1 408.6L686.2 409.8M686.2 409.8L715.9 411.1M715.9 411.1L747.3 412.5M747.3 412.5L780.5 413.9M780.5 413.9L815.7 415.5M815.7 415.5L853.0 417.1M590.1 402.4L613.3 403.3M613.3 403.3L637.6 404.3M637.6 404.3L663.1 405.3M663.1 405.3L689.9 406.4M689.9 406.4L718.1 407.6M718.1 407.6L747.8 408.8M747.8 408.8L779.2 410.0M779.2 410.0L812.3 411.4M812.3 411.4L847.3 412.8M847.3 412.8L884.4 414.3M884.4 414.3L923.8 415.9M643.3 401.5L667.7 402.4M667.7 402.4L693.3 403.4M693.3 403.4L720.1 404.4M720.1 404.4L748.3 405.4M748.3 405.4L778.0 406.5M778.0 406.5L809.2 407.7M809.2 407.7L842.2 409.0M842.2 409.0L877.0 410.3M877.0 410.3L913.9 411.6M913.9 411.6L952.9 413.1M952.9 413.1L994.3 414.7M696.3 400.6L721.9 401.5M721.9 401.5L748.7 402.4M748.7 402.4L776.9 403.4M776.9 403.4L806.5 404.5M806.5 404.5L837.6 405.5M837.6 405.5L870.4 406.7M870.4 406.7L905.0 407.9M905.0 407.9L941.6 409.2M941.6 409.2L980.2 410.5M980.2 410.5L1021.1 411.9M1021.1 411.9L1064.6 413.5M749.1 399.7L775.9 400.6M775.9 400.6L804.1 401.5M804.1 401.5L833.6 402.5M833.6 402.5L864.5 403.5M864.5 403.5L897.1 404.5M897.1 404.5L931.5 405.7M931.5 405.7L967.7 406.8M967.7 406.8L1005.9 408.1M1005.9 408.1L1046.3 409.4M1046.3 409.4L1089.2 410.8M1089.2 410.8L1134.6 412.3M801.8 398.8L829.9 399.7M829.9 399.7L859.2 400.6M859.2 400.6L890.0 401.5M890.0 401.5L922.4 402.5M922.4 402.5L956.4 403.5M956.4 403.5L992.3 404.6M992.3 404.6L1030.1 405.8M1030.1 405.8L1070.0 407.0M1070.0 407.0L1112.2 408.3M1112.2 408.3L1156.9 409.6M1156.9 409.6L1204.4 411.1M854.4 398.0L883.6 398.8M883.6 398.8L914.3 399.7M914.3 399.7L946.4 400.6M946.4 400.6L980.1 401.5M980.1 401.5L1015.6 402.5M1015.6 402.5L1052.9 403.6M1052.9 403.6L1092.3 404.7M1092.3 404.7L1133.9 405.9M1133.9 405.9L1177.9 407.2M1177.9 407.2L1224.5 408.5M1224.5 408.5L1273.9 409.9M906.9 397.1L937.3 397.9M937.3 397.9L969.1 398.8M969.1 398.8L1002.5 399.6M1002.5 399.6L1037.6 400.6M1037.6 400.6L1074.5 401.6M1074.5 401.6L1113.4 402.6M1113.4 402.6L1154.4 403.7M1154.4 403.7L1197.6 404.8M1197.6 404.8L1243.4 406.0M1243.4 406.0L1291.8 407.3M1291.8 407.3L1343.2 408.7M959.2 396.2L990.7 397.0M990.7 397.0L1023.8 397.8M1023.8 397.8L1058.5 398.7M1058.5 398.7L1095.0 399.6M1095.0 399.6L1133.3 400.6M1133.3 400.6L1173.7 401.6M1173.7 401.6L1216.2 402.6M1216.2 402.6L1261.1 403.7M1261.1 403.7L1308.6 404.9M1308.6 404.9L1358.9 406.2M1358.9 406.2L1412.3 407.5M1011.3 395.4L1044.1 396.1M1044.1 396.1L1078.4 396.9M1078.4 396.9L1114.4 397.8M1114.4 397.8L1152.2 398.7M1152.2 398.7L1191.9 399.6M1191.9 399.6L1233.8 400.6M1233.8 400.6L1277.9 401.6M1277.9 401.6L1324.4 402.7M1324.4 402.7L1373.6 403.8M1373.6 403.8L1425.8 405.0M1425.8 405.0L1481.1 406.3M1481.1 406.3L1539.8 407.7M1063.4 394.5L1097.3 395.2M1097.3 395.2L1132.8 396.0M1132.8 396.0L1170.1 396.8M1170.1 396.8L1209.2 397.7M1209.2 397.7L1250.4 398.6M1250.4 398.6L1293.7 399.5M1293.7 399.5L1339.3 400.5M1339.3 400.5L1387.5 401.6M1387.5 401.6L1438.5 402.7M1438.5 402.7L1492.4 403.9M1492.4 403.9L1549.6 405.2M1549.6 405.2L1610.4 406.5M1115.3 393.6L1150.3 394.4M1150.3 394.4L1187.1 395.1M1187.1 395.1L1225.6 395.9M1225.6 395.9L1266.1 396.7M1266.1 396.7L1308.6 397.6M1308.6 397.6L1353.4 398.5M1353.4 398.5L1400.6 399.5M1400.6 399.5L1450.4 400.5M1450.4 400.5L1503.0 401.6M1503.0 401.6L1558.8 402.8M1558.8 402.8L1617.9 404.0M1167.0 392.8L1203.2 393.5M1203.2 393.5L1241.2 394.2M1241.2 394.2L1281.0 395.0M1281.0 395.0L1322.8 395.8M1322.8 395.8L1366.7 396.6M1366.7 396.6L1412.9 397.5M1412.9 397.5L1461.7 398.5M1461.7 398.5L1513.1 399.5M1513.1 399.5L1567.4 400.5M1567.4 400.5L1625.0 401.6M1218.6 391.9L1256.0 392.6M1256.0 392.6L1295.2 393.3M1295.2 393.3L1336.2 394.1M1336.2 394.1L1379.3 394.8M1379.3 394.8L1424.6 395.7M1424.6 395.7L1472.3 396.5M1472.3 396.5L1522.5 397.5M1522.5 397.5L1575.6 398.4M1575.6 398.4L1631.6 399.4M1270.1 391.1L1308.6 391.7M1308.6 391.7L1349.0 392.4M1349.0 392.4L1391.3 393.1M1391.3 393.1L1435.7 393.9M1435.7 393.9L1482.4 394.7M1482.4 394.7L1531.5 395.5M1531.5 395.5L1583.2 396.4M1583.2 396.4L1637.8 397.4M1321.4 390.2L1361.1 390.8M1361.1 390.8L1402.6 391.5M1402.6 391.5L1446.2 392.2M1446.2 392.2L1491.9 393.0M1491.9 393.0L1539.9 393.7M1539.9 393.7L1590.5 394.5M1590.5 394.5L1643.7 395.4M1413.4 390.0L1456.2 390.6M1456.2 390.6L1500.9 391.3M1500.9 391.3L1547.9 392.0M1547.9 392.0L1597.3 392.8M1597.3 392.8L1649.3 393.6M1465.6 389.1L1509.5 389.7M1509.5 389.7L1555.5 390.4M1555.5 390.4L1603.8 391.1M1517.7 388.2L1562.8 388.8M1562.8 388.8L1610.0 389.5M1569.6 387.4L1615.8 388.0" stroke="#505050" stroke-opacity="0.10" stroke-width="1.1" fill="none"/>
<path d="M-16.6 432.0L43.6 428.6M-70.3 438.0L-4.2 434.2M-4.2 434.2L57.4 430.7M57.4 430.7L115.0 427.4M-58.9 440.6L8.9 436.6M8.9 436.6L72.1 432.9M72.1 432.9L131.0 429.4M131.0 429.4L186.2 426.2M-46.8 443.5L22.9 439.2M22.9 439.2L87.7 435.3M87.7 435.3L148.1 431.6M148.1 431.6L204.4 428.2M204.4 428.2L257.1 425.0M-33.8 446.5L38.0 442.0M38.0 442.0L104.5 437.8M104.5 437.8L166.3 433.9M166.3 433.9L223.8 430.3M223.8 430.3L277.5 426.9M54.2 445.0L122.5 440.5M122.5 440.5L185.7 436.4M185.7 436.4L244.5 432.6M244.5 432.6L299.2 429.0M299.2 429.0L350.4 425.7M141.8 443.4L206.6 439.1M206.6 439.1L266.6 435.0M266.6 435.0L322.4 431.2M322.4 431.2L374.4 427.7M374.4 427.7L423.0 424.4M229.0 441.9L290.3 437.6M290.3 437.6L347.2 433.6M347.2 433.6L400.0 429.9M400.0 429.9L449.3 426.4M449.3 426.4L495.3 423.2M315.8 440.4L373.7 436.2M373.7 436.2L427.4 432.2M427.4 432.2L477.4 428.6M477.4 428.6L523.9 425.2M523.9 425.2L567.3 422.0M402.3 438.9L456.8 434.7M456.8 434.7L507.4 430.8M507.4 430.8L554.4 427.2M554.4 427.2L598.2 423.9M598.2 423.9L639.1 420.7M488.3 437.4L539.5 433.3M539.5 433.3L587.0 429.5M587.0 429.5L631.1 425.9M631.1 425.9L672.3 422.6M672.3 422.6L710.7 419.5M574.0 435.9L621.9 431.8M621.9 431.8L666.3 428.1M666.3 428.1L707.5 424.6M707.5 424.6L746.0 421.3M746.0 421.3L782.0 418.3M659.4 434.4L703.9 430.4M703.9 430.4L745.3 426.7M745.3 426.7L783.7 423.3M783.7 423.3L819.5 420.1M819.5 420.1L853.0 417.1M744.4 432.9L785.6 429.0M785.6 429.0L823.9 425.4M823.9 425.4L859.5 422.0M859.5 422.0L892.7 418.8M892.7 418.8L923.8 415.9M787.9 435.6L829.0 431.4M829.0 431.4L867.0 427.6M867.0 427.6L902.3 424.0M902.3 424.0L935.1 420.7M935.1 420.7L965.7 417.6M965.7 417.6L994.3 414.7M875.6 434.1L913.2 430.0M913.2 430.0L948.0 426.2M948.0 426.2L980.3 422.7M980.3 422.7L1010.4 419.4M1010.4 419.4L1038.4 416.3M1038.4 416.3L1064.6 413.5M963.0 432.5L997.1 428.5M997.1 428.5L1028.7 424.8M1028.7 424.8L1058.1 421.3M1058.1 421.3L1085.3 418.1M1085.3 418.1L1110.8 415.1M1110.8 415.1L1134.6 412.3M1050.0 431.0L1080.7 427.0M1080.7 427.0L1109.1 423.4M1109.1 423.4L1135.5 420.0M1135.5 420.0L1160.0 416.8M1160.0 416.8L1183.0 413.8M1183.0 413.8L1204.4 411.1M1136.5 429.5L1163.9 425.6M1163.9 425.6L1189.1 422.0M1189.1 422.0L1212.6 418.6M1212.6 418.6L1234.5 415.5M1234.5 415.5L1254.9 412.6M1254.9 412.6L1273.9 409.9M1222.8 428.0L1246.7 424.1M1246.7 424.1L1268.9 420.6M1268.9 420.6L1289.4 417.3M1289.4 417.3L1308.6 414.2M1308.6 414.2L1326.5 411.4M1326.5 411.4L1343.2 408.7M1308.6 426.5L1329.2 422.7M1329.2 422.7L1348.3 419.2M1348.3 419.2L1366.0 416.0M1366.0 416.0L1382.5 413.0M1382.5 413.0L1397.9 410.1M1397.9 410.1L1412.3 407.5M1394.0 425.0L1411.3 421.3M1411.3 421.3L1427.3 417.8M1427.3 417.8L1442.2 414.7M1442.2 414.7L1456.0 411.7M1456.0 411.7L1469.0 408.9M1469.0 408.9L1481.1 406.3M1479.1 423.5L1493.1 419.8M1493.1 419.8L1506.1 416.5M1506.1 416.5L1518.1 413.3M1518.1 413.3L1529.3 410.4M1529.3 410.4L1539.8 407.7M-16.6 432.0L-4.2 434.2M-4.2 434.2L8.9 436.6M8.9 436.6L22.9 439.2M22.9 439.2L38.0 442.0M38.0 442.0L54.2 445.0M43.6 428.6L57.4 430.7M57.4 430.7L72.1 432.9M72.1 432.9L87.7 435.3M87.7 435.3L104.5 437.8M104.5 437.8L122.5 440.5M122.5 440.5L141.8 443.4M115.0 427.4L131.0 429.4M131.0 429.4L148.1 431.6M148.1 431.6L166.3 433.9M166.3 433.9L185.7 436.4M185.7 436.4L206.6 439.1M206.6 439.1L229.0 441.9M186.2 426.2L204.4 428.2M204.4 428.2L223.8 430.3M223.8 430.3L244.5 432.6M244.5 432.6L266.6 435.0M266.6 435.0L290.3 437.6M290.3 437.6L315.8 440.4M277.5 426.9L299.2 429.0M299.2 429.0L322.4 431.2M322.4 431.2L347.2 433.6M347.2 433.6L373.7 436.2M373.7 436.2L402.3 438.9M350.4 425.7L374.4 427.7M374.4 427.7L400.0 429.9M400.0 429.9L427.4 432.2M427.4 432.2L456.8 434.7M456.8 434.7L488.3 437.4M423.0 424.4L449.3 426.4M449.3 426.4L477.4 428.6M477.4 428.6L507.4 430.8M507.4 430.8L539.5 433.3M539.5 433.3L574.0 435.9M495.3 423.2L523.9 425.2M523.9 425.2L554.4 427.2M554.4 427.2L587.0 429.5M587.0 429.5L621.9 431.8M621.9 431.8L659.4 434.4M567.3 422.0L598.2 423.9M598.2 423.9L631.1 425.9M631.1 425.9L666.3 428.1M666.3 428.1L703.9 430.4M703.9 430.4L744.4 432.9M639.1 420.7L672.3 422.6M672.3 422.6L707.5 424.6M707.5 424.6L745.3 426.7M745.3 426.7L785.6 429.0M785.6 429.0L829.0 431.4M829.0 431.4L875.6 434.1M710.7 419.5L746.0 421.3M746.0 421.3L783.7 423.3M783.7 423.3L823.9 425.4M823.9 425.4L867.0 427.6M867.0 427.6L913.2 430.0M913.2 430.0L963.0 432.5M782.0 418.3L819.5 420.1M819.5 420.1L859.5 422.0M859.5 422.0L902.3 424.0M902.3 424.0L948.0 426.2M948.0 426.2L997.1 428.5M997.1 428.5L1050.0 431.0M853.0 417.1L892.7 418.8M892.7 418.8L935.1 420.7M935.1 420.7L980.3 422.7M980.3 422.7L1028.7 424.8M1028.7 424.8L1080.7 427.0M1080.7 427.0L1136.5 429.5M923.8 415.9L965.7 417.6M965.7 417.6L1010.4 419.4M1010.4 419.4L1058.1 421.3M1058.1 421.3L1109.1 423.4M1109.1 423.4L1163.9 425.6M1163.9 425.6L1222.8 428.0M994.3 414.7L1038.4 416.3M1038.4 416.3L1085.3 418.1M1085.3 418.1L1135.5 420.0M1135.5 420.0L1189.1 422.0M1189.1 422.0L1246.7 424.1M1246.7 424.1L1308.6 426.5M1064.6 413.5L1110.8 415.1M1110.8 415.1L1160.0 416.8M1160.0 416.8L1212.6 418.6M1212.6 418.6L1268.9 420.6M1268.9 420.6L1329.2 422.7M1329.2 422.7L1394.0 425.0M1134.6 412.3L1183.0 413.8M1183.0 413.8L1234.5 415.5M1234.5 415.5L1289.4 417.3M1289.4 417.3L1348.3 419.2M1348.3 419.2L1411.3 421.3M1411.3 421.3L1479.1 423.5M1204.4 411.1L1254.9 412.6M1254.9 412.6L1308.6 414.2M1308.6 414.2L1366.0 416.0M1366.0 416.0L1427.3 417.8M1427.3 417.8L1493.1 419.8M1493.1 419.8L1563.8 422.0M1273.9 409.9L1326.5 411.4M1326.5 411.4L1382.5 413.0M1382.5 413.0L1442.2 414.7M1442.2 414.7L1506.1 416.5M1506.1 416.5L1574.6 418.4M1574.6 418.4L1648.2 420.5M1343.2 408.7L1397.9 410.1M1397.9 410.1L1456.0 411.7M1456.0 411.7L1518.1 413.3M1518.1 413.3L1584.5 415.1M1584.5 415.1L1655.7 417.0M1412.3 407.5L1469.0 408.9M1469.0 408.9L1529.3 410.4M1529.3 410.4L1593.8 412.0M1593.8 412.0L1662.6 413.7M1539.8 407.7L1602.4 409.2" stroke="#505050" stroke-opacity="0.15" stroke-width="1.1" fill="none"/>
<path d="M-19.7 449.8L54.2 445.0M-87.5 458.9L-4.5 453.3M-4.5 453.3L71.7 448.2M71.7 448.2L141.8 443.4M-73.9 463.2L12.0 457.2M12.0 457.2L90.5 451.6M90.5 451.6L162.6 446.6M162.6 446.6L229.0 441.9M30.0 461.3L111.0 455.4M111.0 455.4L185.1 450.0M185.1 450.0L253.1 445.0M253.1 445.0L315.8 440.4M133.3 459.5L209.5 453.7M209.5 453.7L279.2 448.3M279.2 448.3L343.3 443.4M343.3 443.4L402.3 438.9M236.0 457.7L307.5 451.9M307.5 451.9L372.9 446.7M372.9 446.7L433.0 441.8M433.0 441.8L488.3 437.4M338.3 455.8L405.1 450.2M405.1 450.2L466.2 445.0M466.2 445.0L522.3 440.3M522.3 440.3L574.0 435.9M440.0 454.0L502.1 448.5M502.1 448.5L559.0 443.4M559.0 443.4L611.2 438.7M611.2 438.7L659.4 434.4M541.2 452.2L598.7 446.7M598.7 446.7L651.4 441.7M651.4 441.7L699.7 437.2M699.7 437.2L744.4 432.9M641.9 450.4L694.9 445.0M694.9 445.0L743.3 440.1M743.3 440.1L787.9 435.6M742.1 448.6L790.5 443.3M790.5 443.3L834.9 438.5M834.9 438.5L875.6 434.1M841.8 446.8L885.7 441.7M885.7 441.7L926.0 436.9M926.0 436.9L963.0 432.5M941.0 445.1L980.5 440.0M980.5 440.0L1016.7 435.3M1016.7 435.3L1050.0 431.0M1039.7 443.3L1074.8 438.3M1074.8 438.3L1107.0 433.7M1107.0 433.7L1136.5 429.5M1137.9 441.5L1168.6 436.6M1168.6 436.6L1196.8 432.1M1196.8 432.1L1222.8 428.0M1235.6 439.8L1262.0 435.0M1262.0 435.0L1286.3 430.5M1286.3 430.5L1308.6 426.5M1332.8 438.1L1355.0 433.3M1355.0 433.3L1375.3 429.0M1375.3 429.0L1394.0 425.0M1429.6 436.3L1447.5 431.7M1447.5 431.7L1464.0 427.4M1464.0 427.4L1479.1 423.5M54.2 445.0L71.7 448.2M71.7 448.2L90.5 451.6M90.5 451.6L111.0 455.4M111.0 455.4L133.3 459.5M141.8 443.4L162.6 446.6M162.6 446.6L185.1 450.0M185.1 450.0L209.5 453.7M209.5 453.7L236.0 457.7M229.0 441.9L253.1 445.0M253.1 445.0L279.2 448.3M279.2 448.3L307.5 451.9M307.5 451.9L338.3 455.8M315.8 440.4L343.3 443.4M343.3 443.4L372.9 446.7M372.9 446.7L405.1 450.2M405.1 450.2L440.0 454.0M402.3 438.9L433.0 441.8M433.0 441.8L466.2 445.0M466.2 445.0L502.1 448.5M502.1 448.5L541.2 452.2M488.3 437.4L522.3 440.3M522.3 440.3L559.0 443.4M559.0 443.4L598.7 446.7M598.7 446.7L641.9 450.4M574.0 435.9L611.2 438.7M611.2 438.7L651.4 441.7M651.4 441.7L694.9 445.0M694.9 445.0L742.1 448.6M659.4 434.4L699.7 437.2M699.7 437.2L743.3 440.1M743.3 440.1L790.5 443.3M790.5 443.3L841.8 446.8M744.4 432.9L787.9 435.6M787.9 435.6L834.9 438.5M834.9 438.5L885.7 441.7M885.7 441.7L941.0 445.1M875.6 434.1L926.0 436.9M926.0 436.9L980.5 440.0M980.5 440.0L1039.7 443.3M963.0 432.5L1016.7 435.3M1016.7 435.3L1074.8 438.3M1074.8 438.3L1137.9 441.5M1050.0 431.0L1107.0 433.7M1107.0 433.7L1168.6 436.6M1168.6 436.6L1235.6 439.8M1136.5 429.5L1196.8 432.1M1196.8 432.1L1262.0 435.0M1262.0 435.0L1332.8 438.1M1222.8 428.0L1286.3 430.5M1286.3 430.5L1355.0 433.3M1355.0 433.3L1429.6 436.3M1308.6 426.5L1375.3 429.0M1375.3 429.0L1447.5 431.7M1447.5 431.7L1525.9 434.6M1394.0 425.0L1464.0 427.4M1464.0 427.4L1539.6 430.0M1539.6 430.0L1621.7 432.9M1479.1 423.5L1552.2 425.8M1552.2 425.8L1631.3 428.4M1563.8 422.0L1640.1 424.3" stroke="#505050" stroke-opacity="0.20" stroke-width="1.1" fill="none"/>
<path d="M-59.0 467.9L30.0 461.3M-42.7 473.0L49.6 465.9M49.6 465.9L133.3 459.5M71.1 470.9L157.6 464.0M157.6 464.0L236.0 457.7M184.2 468.9L265.0 462.0M265.0 462.0L338.3 455.8M296.8 466.8L371.9 460.1M371.9 460.1L440.0 454.0M408.7 464.8L478.1 458.2M478.1 458.2L541.2 452.2M519.9 462.8L583.9 456.3M583.9 456.3L641.9 450.4M630.6 460.8L689.0 454.4M689.0 454.4L742.1 448.6M740.7 458.8L793.7 452.5M793.7 452.5L841.8 446.8M850.1 456.8L897.7 450.7M897.7 450.7L941.0 445.1M912.2 461.5L958.9 454.8M958.9 454.8L1001.2 448.8M1001.2 448.8L1039.7 443.3M1026.2 459.4L1067.2 452.9M1067.2 452.9L1104.2 446.9M1104.2 446.9L1137.9 441.5M1139.7 457.3L1174.8 450.9M1174.8 450.9L1206.7 445.1M1206.7 445.1L1235.6 439.8M1252.4 455.3L1281.9 449.0M1281.9 449.0L1308.6 443.3M1308.6 443.3L1332.8 438.1M1364.5 453.2L1388.4 447.0M1388.4 447.0L1410.0 441.4M1410.0 441.4L1429.6 436.3M133.3 459.5L157.6 464.0M157.6 464.0L184.2 468.9M1586.9 449.2L1599.6 443.2M1599.6 443.2L1611.2 437.8M236.0 457.7L265.0 462.0M265.0 462.0L296.8 466.8M338.3 455.8L371.9 460.1M371.9 460.1L408.7 464.8M440.0 454.0L478.1 458.2M478.1 458.2L519.9 462.8M541.2 452.2L583.9 456.3M583.9 456.3L630.6 460.8M641.9 450.4L689.0 454.4M689.0 454.4L740.7 458.8M742.1 448.6L793.7 452.5M793.7 452.5L850.1 456.8M841.8 446.8L897.7 450.7M897.7 450.7L958.9 454.8M958.9 454.8L1026.2 459.4M941.0 445.1L1001.2 448.8M1001.2 448.8L1067.2 452.9M1067.2 452.9L1139.7 457.3M1039.7 443.3L1104.2 446.9M1104.2 446.9L1174.8 450.9M1174.8 450.9L1252.4 455.3M1137.9 441.5L1206.7 445.1M1206.7 445.1L1281.9 449.0M1281.9 449.0L1364.5 453.2M1235.6 439.8L1308.6 443.3M1308.6 443.3L1388.4 447.0M1388.4 447.0L1476.0 451.2M1332.8 438.1L1410.0 441.4M1410.0 441.4L1494.3 445.1M1494.3 445.1L1586.9 449.2M1429.6 436.3L1510.8 439.6M1510.8 439.6L1599.6 443.2M1599.6 443.2L1697.1 447.2M1525.9 434.6L1611.2 437.8" stroke="#505050" stroke-opacity="0.25" stroke-width="1.1" fill="none"/>
<path d="M-24.8 478.6L71.1 470.9M-4.9 484.9L94.8 476.4M94.8 476.4L184.2 468.9M121.0 482.5L213.6 474.3M213.6 474.3L296.8 466.8M246.1 480.2L331.7 472.1M331.7 472.1L408.7 464.8M370.5 477.9L449.2 470.0M449.2 470.0L519.9 462.8M494.0 475.7L565.9 467.8M565.9 467.8L630.6 460.8M616.8 473.4L682.0 465.7M682.0 465.7L740.7 458.8M738.9 471.2L797.4 463.6M797.4 463.6L850.1 456.8M860.2 468.9L912.2 461.5M980.8 466.7L1026.2 459.4M1100.6 464.5L1139.7 457.3M1219.7 462.3L1252.4 455.3M-24.8 478.6L-4.9 484.9M1308.5 467.8L1338.1 460.1M1338.1 460.1L1364.5 453.2M184.2 468.9L213.6 474.3M213.6 474.3L246.1 480.2M1557.0 463.2L1572.7 455.8M1572.7 455.8L1586.9 449.2M296.8 466.8L331.7 472.1M331.7 472.1L370.5 477.9M408.7 464.8L449.2 470.0M449.2 470.0L494.0 475.7M519.9 462.8L565.9 467.8M565.9 467.8L616.8 473.4M630.6 460.8L682.0 465.7M682.0 465.7L738.9 471.2M740.7 458.8L797.4 463.6M797.4 463.6L860.2 468.9M850.1 456.8L912.2 461.5M912.2 461.5L980.8 466.7M1026.2 459.4L1100.6 464.5M1139.7 457.3L1219.7 462.3M1219.7 462.3L1308.5 467.8M1252.4 455.3L1338.1 460.1M1338.1 460.1L1433.2 465.5M1364.5 453.2L1455.8 457.9M1455.8 457.9L1557.0 463.2M1476.0 451.2L1572.7 455.8M1572.7 455.8L1680.0 460.9M1586.9 449.2L1689.0 453.6" stroke="#505050" stroke-opacity="0.30" stroke-width="1.1" fill="none"/>
<path d="M-116.6 494.3L-4.9 484.9M17.3 491.8L121.0 482.5M150.2 489.3L246.1 480.2M183.0 497.0L282.3 486.9M282.3 486.9L370.5 477.9M322.8 494.3L413.5 484.4M413.5 484.4L494.0 475.7M461.7 491.7L543.9 482.0M543.9 482.0L616.8 473.4M599.7 489.1L673.4 479.6M673.4 479.6L738.9 471.2M736.7 486.5L802.1 477.2M802.1 477.2L860.2 468.9M872.7 484.0L929.9 474.8M929.9 474.8L980.8 466.7M1007.9 481.4L1056.9 472.5M1056.9 472.5L1100.6 464.5M1142.1 478.9L1183.1 470.1M1183.1 470.1L1219.7 462.3M-4.9 484.9L17.3 491.8M1275.4 476.4L1308.5 467.8M246.1 480.2L282.3 486.9M282.3 486.9L322.8 494.3M1539.3 471.4L1557.0 463.2M370.5 477.9L413.5 484.4M413.5 484.4L461.7 491.7M494.0 475.7L543.9 482.0M543.9 482.0L599.7 489.1M616.8 473.4L673.4 479.6M673.4 479.6L736.7 486.5M738.9 471.2L802.1 477.2M802.1 477.2L872.7 484.0M860.2 468.9L929.9 474.8M929.9 474.8L1007.9 481.4M980.8 466.7L1056.9 472.5M1056.9 472.5L1142.1 478.9M1100.6 464.5L1183.1 470.1M1183.1 470.1L1275.4 476.4M1308.5 467.8L1407.8 473.9M1433.2 465.5L1539.3 471.4M1557.0 463.2L1669.9 469.0" stroke="#505050" stroke-opacity="0.35" stroke-width="1.1" fill="none"/>
<path d="M-99.7 502.3L17.3 491.8M-80.8 511.3L42.1 499.6M42.1 499.6L150.2 489.3M70.1 508.4L183.0 497.0M219.9 505.6L322.8 494.3M368.5 502.7L461.7 491.7M516.1 499.9L599.7 489.1M662.5 497.1L736.7 486.5M807.9 494.4L872.7 484.0M952.3 491.6L1007.9 481.4M1095.5 488.9L1142.1 478.9M17.3 491.8L42.1 499.6M42.1 499.6L70.1 508.4M1237.8 486.2L1275.4 476.4M322.8 494.3L368.5 502.7M1519.2 480.8L1539.3 471.4M461.7 491.7L516.1 499.9M599.7 489.1L662.5 497.1M736.7 486.5L807.9 494.4M872.7 484.0L952.3 491.6M1007.9 481.4L1095.5 488.9M1142.1 478.9L1237.8 486.2M1275.4 476.4L1379.0 483.5M1407.8 473.9L1519.2 480.8M1539.3 471.4L1658.4 478.2" stroke="#505050" stroke-opacity="0.40" stroke-width="1.1" fill="none"/>
<path d="M-59.2 521.5L70.1 508.4M102.0 518.4L219.9 505.6M261.8 515.3L368.5 502.7M420.4 512.3L516.1 499.9M577.7 509.2L662.5 497.1M733.8 506.2L807.9 494.4M888.7 503.2L952.3 491.6M1042.4 500.2L1095.5 488.9M70.1 508.4L102.0 518.4M1194.9 497.3L1237.8 486.2M368.5 502.7L420.4 512.3M1496.4 491.5L1519.2 480.8M516.1 499.9L577.7 509.2M662.5 497.1L733.8 506.2M807.9 494.4L888.7 503.2M952.3 491.6L1042.4 500.2M1095.5 488.9L1194.9 497.3M1237.8 486.2L1346.2 494.4M1379.0 483.5L1496.4 491.5M1519.2 480.8L1645.4 488.6" stroke="#505050" stroke-opacity="0.45" stroke-width="1.1" fill="none"/>
<path d="M-34.4 533.3L102.0 518.4M138.5 529.9L261.8 515.3M309.9 526.5L420.4 512.3M479.9 523.2L577.7 509.2M648.4 519.9L733.8 506.2M815.5 516.6L888.7 503.2M981.2 513.4L1042.4 500.2M102.0 518.4L138.5 529.9M1145.5 510.1L1194.9 497.3M420.4 512.3L479.9 523.2M1470.1 503.8L1496.4 491.5M577.7 509.2L648.4 519.9M733.8 506.2L815.5 516.6M888.7 503.2L981.2 513.4M1042.4 500.2L1145.5 510.1M1194.9 497.3L1308.5 506.9M1346.2 494.4L1470.1 503.8M1496.4 491.5L1630.4 500.6" stroke="#505050" stroke-opacity="0.50" stroke-width="1.1" fill="none"/>
<path d="M548.7 535.8L648.4 519.9M730.1 532.2L815.5 516.6M909.9 528.6L981.2 513.4M1088.0 525.1L1145.5 510.1M479.9 523.2L548.7 535.8M1439.6 518.0L1470.1 503.8M648.4 519.9L730.1 532.2M815.5 516.6L909.9 528.6M981.2 513.4L1088.0 525.1M1145.5 510.1L1264.6 521.5M1308.5 506.9L1439.6 518.0M1470.1 503.8L1613.0 514.6" stroke="#505050" stroke-opacity="0.55" stroke-width="1.1" fill="none"/>
<path d="M-5.6 546.9L138.5 529.9M180.8 543.2L309.9 526.5M365.6 539.5L479.9 523.2M138.5 529.9L180.8 543.2M1403.6 534.9L1439.6 518.0M1592.5 531.0L1613.0 514.6M1439.6 518.0L1592.5 531.0" stroke="#505050" stroke-opacity="0.60" stroke-width="1.1" fill="none"/>
<path d="M28.1 562.9L180.8 543.2M230.5 558.8L365.6 539.5M430.9 554.7L548.7 535.8M629.3 550.6L730.1 532.2M-5.6 546.9L28.1 562.9M825.7 546.6L909.9 528.6M180.8 543.2L230.5 558.8M1020.3 542.7L1088.0 525.1M548.7 535.8L629.3 550.6M730.1 532.2L825.7 546.6M909.9 528.6L1020.3 542.7M1088.0 525.1L1212.9 538.8M1264.6 521.5L1403.6 534.9" stroke="#505050" stroke-opacity="0.65" stroke-width="1.1" fill="none"/>
<path d="M725.0 568.2L825.7 546.6M939.1 563.8L1020.3 542.7M629.3 550.6L725.0 568.2M1360.7 555.0L1403.6 534.9M825.7 546.6L939.1 563.8M1568.1 550.6L1592.5 531.0M1020.3 542.7L1151.0 559.3M1212.9 538.8L1360.7 555.0M1403.6 534.9L1568.1 550.6M1592.5 531.0L1773.3 546.3" stroke="#505050" stroke-opacity="0.70" stroke-width="1.1" fill="none"/>
<path d="M-155.6 586.6L28.1 562.9M68.2 581.9L230.5 558.8M289.5 577.3L430.9 554.7M508.4 572.7L629.3 550.6M28.1 562.9L68.2 581.9M230.5 558.8L289.5 577.3" stroke="#505050" stroke-opacity="0.75" stroke-width="1.1" fill="none"/>
<path d="M116.8 605.0L289.5 577.3M360.9 599.7L508.4 572.7M602.0 594.5L725.0 568.2M289.5 577.3L360.9 599.7M840.3 589.4L939.1 563.8M725.0 568.2L840.3 589.4M1308.4 579.4L1360.7 555.0M939.1 563.8L1075.8 584.4M1538.4 574.4L1568.1 550.6M1151.0 559.3L1308.4 579.4M1360.7 555.0L1538.4 574.4M1568.1 550.6L1765.6 569.6" stroke="#505050" stroke-opacity="0.80" stroke-width="1.1" fill="none"/>
<path d="M-130.3 610.3L68.2 581.9M68.2 581.9L116.8 605.0" stroke="#505050" stroke-opacity="0.85" stroke-width="1.1" fill="none"/>
<path d="M-99.1 639.5L116.8 605.0M176.7 633.4L360.9 599.7M116.8 605.0L176.7 633.4M448.9 627.3L602.0 594.5M360.9 599.7L448.9 627.3M717.3 621.4L840.3 589.4M840.3 589.4L982.2 615.5M1243.6 609.7L1308.4 579.4M1075.8 584.4L1243.6 609.7M1501.5 604.0L1538.4 574.4M1308.4 579.4L1501.5 604.0M1538.4 574.4L1756.1 598.3" stroke="#505050" stroke-opacity="0.90" stroke-width="1.1" fill="none"/>
<path d="M1243.6 609.7L1454.7 641.5M1454.7 641.5L1501.5 604.0M1501.5 604.0L1744.1 634.8" stroke="#505050" stroke-opacity="0.95" stroke-width="1.1" fill="none"/>
<path d="M-59.6 676.6L176.7 633.4M-7.9 725.1L62.8 791.4M62.8 791.4L165.1 887.4M165.1 887.4L326.4 1038.6M-7.9 725.1L252.6 669.4M176.7 633.4L252.6 669.4M252.6 669.4L448.9 627.3M252.6 669.4L351.7 716.4M351.7 716.4L486.7 780.4M486.7 780.4L681.3 872.6M681.3 872.6L986.2 1017.2M-364.6 902.5L62.8 791.4M62.8 791.4L351.7 716.4M351.7 716.4L560.0 662.2M448.9 627.3L560.0 662.2M560.0 662.2L717.3 621.4M560.0 662.2L704.9 707.8M704.9 707.8L901.7 769.5M901.7 769.5L1184.4 858.3M1184.4 858.3L1624.6 996.5M326.4 1038.6L681.3 872.6M681.3 872.6L901.7 769.5M901.7 769.5L1052.0 699.3M1052.0 699.3L1161.0 648.3M982.2 615.5L1161.0 648.3M1161.0 648.3L1243.6 609.7M1161.0 648.3L1393.0 691.0M1393.0 691.0L1706.5 748.6M986.2 1017.2L1184.4 858.3M1184.4 858.3L1308.3 759.0M1308.3 759.0L1393.0 691.0M1393.0 691.0L1454.7 641.5M1454.7 641.5L1728.2 682.8M1532.3 1276.2L1624.6 996.5" stroke="#505050" stroke-opacity="1.00" stroke-width="1.1" fill="none"/>
<path d="M-19.7 449.8L-4.5 453.3" stroke="#b03a4c" stroke-opacity="0.35" stroke-width="1.6" fill="none"/>
<path d="M-4.5 453.3L12.0 457.2M12.0 457.2L30.0 461.3" stroke="#b03a4c" stroke-opacity="0.40" stroke-width="1.6" fill="none"/>
<path d="M30.0 461.3L49.6 465.9M49.6 465.9L71.1 470.9M71.1 470.9L94.8 476.4" stroke="#b03a4c" stroke-opacity="0.45" stroke-width="1.6" fill="none"/>
<path d="M94.8 476.4L121.0 482.5M121.0 482.5L150.2 489.3" stroke="#b03a4c" stroke-opacity="0.50" stroke-width="1.6" fill="none"/>
<path d="M150.2 489.3L183.0 497.0" stroke="#b03a4c" stroke-opacity="0.55" stroke-width="1.6" fill="none"/>
<path d="M183.0 497.0L219.9 505.6" stroke="#b03a4c" stroke-opacity="0.60" stroke-width="1.6" fill="none"/>
<path d="M219.9 505.6L261.8 515.3M261.8 515.3L309.9 526.5" stroke="#b03a4c" stroke-opacity="0.65" stroke-width="1.6" fill="none"/>
<path d="M309.9 526.5L365.6 539.5" stroke="#b03a4c" stroke-opacity="0.70" stroke-width="1.6" fill="none"/>
<path d="M365.6 539.5L430.9 554.7" stroke="#b03a4c" stroke-opacity="0.75" stroke-width="1.6" fill="none"/>
<path d="M430.9 554.7L508.4 572.7" stroke="#b03a4c" stroke-opacity="0.85" stroke-width="1.6" fill="none"/>
<path d="M508.4 572.7L602.0 594.5" stroke="#b03a4c" stroke-opacity="0.90" stroke-width="1.6" fill="none"/>
<path d="M602.0 594.5L717.3 621.4" stroke="#b03a4c" stroke-opacity="0.95" stroke-width="1.6" fill="none"/>
<path d="M717.3 621.4L862.8 655.2M862.8 655.2L1052.0 699.3M1052.0 699.3L1308.3 759.0M1308.3 759.0L1674.9 844.3" stroke="#b03a4c" stroke-opacity="1.00" stroke-width="1.6" fill="none"/>
<path d="M1584.5 415.1L1593.8 412.0M1593.8 412.0L1602.4 409.2" stroke="#6c9a2a" stroke-opacity="0.30" stroke-width="1.6" fill="none"/>
<path d="M1539.6 430.0L1552.2 425.8M1552.2 425.8L1563.8 422.0M1563.8 422.0L1574.6 418.4M1574.6 418.4L1584.5 415.1" stroke="#6c9a2a" stroke-opacity="0.35" stroke-width="1.6" fill="none"/>
<path d="M1510.8 439.6L1525.9 434.6M1525.9 434.6L1539.6 430.0" stroke="#6c9a2a" stroke-opacity="0.40" stroke-width="1.6" fill="none"/>
<path d="M1476.0 451.2L1494.3 445.1M1494.3 445.1L1510.8 439.6" stroke="#6c9a2a" stroke-opacity="0.45" stroke-width="1.6" fill="none"/>
<path d="M1433.2 465.5L1455.8 457.9M1455.8 457.9L1476.0 451.2" stroke="#6c9a2a" stroke-opacity="0.50" stroke-width="1.6" fill="none"/>
<path d="M1379.0 483.5L1407.8 473.9M1407.8 473.9L1433.2 465.5" stroke="#6c9a2a" stroke-opacity="0.55" stroke-width="1.6" fill="none"/>
<path d="M1346.2 494.4L1379.0 483.5" stroke="#6c9a2a" stroke-opacity="0.60" stroke-width="1.6" fill="none"/>
<path d="M1308.5 506.9L1346.2 494.4" stroke="#6c9a2a" stroke-opacity="0.65" stroke-width="1.6" fill="none"/>
<path d="M1264.6 521.5L1308.5 506.9" stroke="#6c9a2a" stroke-opacity="0.70" stroke-width="1.6" fill="none"/>
<path d="M1212.9 538.8L1264.6 521.5" stroke="#6c9a2a" stroke-opacity="0.75" stroke-width="1.6" fill="none"/>
<path d="M1151.0 559.3L1212.9 538.8" stroke="#6c9a2a" stroke-opacity="0.80" stroke-width="1.6" fill="none"/>
<path d="M1075.8 584.4L1151.0 559.3" stroke="#6c9a2a" stroke-opacity="0.90" stroke-width="1.6" fill="none"/>
<path d="M982.2 615.5L1075.8 584.4" stroke="#6c9a2a" stroke-opacity="0.95" stroke-width="1.6" fill="none"/>
<path d="M-355.9 1060.7L165.1 887.4M165.1 887.4L486.7 780.4M486.7 780.4L704.9 707.8M704.9 707.8L862.8 655.2M862.8 655.2L982.2 615.5" stroke="#6c9a2a" stroke-opacity="1.00" stroke-width="1.6" fill="none"/>
<defs>
<linearGradient id="gside" x1="0" y1="0" x2="0.25" y2="1"><stop offset="0" stop-color="#8a8a8a"/><stop offset="0.4" stop-color="#828282"/><stop offset="1" stop-color="#777777"/></linearGradient>
<linearGradient id="ghood" x1="0" y1="0" x2="1" y2="0.6"><stop offset="0" stop-color="#acacac"/><stop offset="0.5" stop-color="#a3a3a3"/><stop offset="1" stop-color="#999"/></linearGradient>
<linearGradient id="gfend" x1="0" y1="0" x2="1" y2="1"><stop offset="0" stop-color="#a2a2a2"/><stop offset="0.5" stop-color="#939393"/><stop offset="1" stop-color="#858585"/></linearGradient>
<linearGradient id="groof" x1="0" y1="0" x2="0" y2="1"><stop offset="0" stop-color="#8e8e8e"/><stop offset="0.5" stop-color="#959595"/><stop offset="1" stop-color="#9c9c9c"/></linearGradient>
<linearGradient id="gwin" x1="0" y1="0" x2="0" y2="1"><stop offset="0" stop-color="#747474"/><stop offset="1" stop-color="#6a6a6a"/></linearGradient>
<linearGradient id="gglass" x1="0" y1="0" x2="1" y2="0"><stop offset="0" stop-color="#b2b4b5"/><stop offset="0.6" stop-color="#babcbd"/><stop offset="1" stop-color="#b5b7b8"/></linearGradient>
<radialGradient id="glamp" cx="0.7" cy="0.35" r="0.8"><stop offset="0" stop-color="#c8c9ca"/><stop offset="0.6" stop-color="#adadad"/><stop offset="1" stop-color="#959595"/></radialGradient>
<linearGradient id="grim" x1="0" y1="0" x2="1" y2="0.3"><stop offset="0" stop-color="#b0b0b0"/><stop offset="1" stop-color="#888"/></linearGradient>
</defs>
<g id="car" stroke-linejoin="round">
<path d="M492.3 625.1C492.8 624.8 493.8 625.0 495.0 623.0C496.2 621.0 499.3 620.4 499.4 612.8C499.5 605.2 497.5 585.4 495.8 577.6C494.1 569.8 490.8 570.7 489.0 566.0C487.2 561.3 485.5 554.6 485.3 549.6C485.1 544.6 485.5 540.0 488.0 536.0C490.5 532.0 495.2 529.0 500.1 525.4C505.1 521.8 510.6 517.2 517.7 514.1C524.8 511.0 532.4 509.4 542.9 506.5C553.4 503.6 570.1 499.2 580.6 496.5C591.1 493.8 596.9 492.4 605.7 490.2C614.5 488.0 626.9 485.2 633.4 483.3C639.9 481.4 641.8 480.9 644.7 478.9C647.6 476.9 650.0 472.6 651.0 471.3L651.0 471.3C655.9 462.8 672.1 433.6 680.2 420.1C688.3 406.6 696.2 395.3 699.4 390.3L699.4 390.3C699.5 389.3 698.2 386.4 700.0 384.5C701.8 382.6 705.8 381.2 710.4 379.0C715.0 376.8 718.5 373.9 727.7 371.4C736.9 368.9 750.8 365.9 765.4 363.8C780.0 361.7 794.7 360.1 815.6 358.8C836.5 357.6 865.9 356.6 891.0 356.3C916.1 356.0 945.5 356.5 966.4 357.1C987.3 357.7 1002.0 358.4 1016.6 360.0C1031.2 361.6 1046.1 364.2 1054.3 366.4C1062.5 368.6 1063.5 370.9 1066.0 373.0C1068.5 375.1 1068.7 377.4 1069.6 379.0C1070.5 380.6 1071.2 381.8 1071.5 382.4L1071.5 382.4C1071.7 382.8 1070.8 380.8 1072.6 385.0C1074.4 389.2 1078.8 398.8 1082.6 407.6C1086.3 416.4 1091.3 428.9 1095.1 437.7C1098.8 446.5 1101.8 453.1 1105.1 460.2C1108.4 467.3 1112.3 473.6 1115.2 480.3C1118.1 487.0 1121.0 494.5 1122.7 500.3C1124.4 506.1 1124.4 510.0 1125.2 515.4C1126.0 520.8 1126.9 527.5 1127.7 532.9C1128.5 538.3 1129.8 545.5 1130.2 548.0L1130.2 548.0C1130.8 548.4 1133.0 548.4 1134.0 550.5C1135.0 552.6 1137.1 558.6 1136.5 560.5C1135.9 562.4 1131.2 561.5 1130.2 561.7L1130.2 561.7C1126.0 564.0 1114.3 569.0 1105.1 575.5C1095.9 582.0 1080.7 595.5 1075.0 600.6C1069.3 605.7 1071.8 605.1 1071.2 606.0L1071.2 606.0C1038.5 618.1 909.2 665.1 875.3 678.5C841.4 691.9 869.0 685.1 867.8 686.4L867.8 686.4C854.2 682.9 803.0 668.4 786.3 665.5C769.6 662.6 771.5 666.4 767.5 669.3C763.5 672.1 762.9 680.4 762.0 682.6L762.0 682.6C760.3 682.6 753.3 682.6 751.6 682.6L751.6 682.6C751.4 683.0 751.4 684.2 750.2 684.9C749.0 685.6 745.5 686.6 744.5 687.0L744.5 687.0C744.5 687.5 744.6 688.3 744.5 690.2C744.4 692.1 744.4 696.8 744.0 698.5C743.6 700.2 742.5 700.0 742.2 700.3L742.2 700.8C735.0 700.8 706.3 701.0 699.1 701.0L699.1 701.0C699.1 703.9 699.5 714.6 699.1 718.4C698.7 722.2 703.7 724.6 696.5 723.7C689.3 722.8 671.5 717.5 656.0 713.1C640.5 708.7 623.7 704.0 603.2 697.3C582.7 690.5 546.3 678.2 532.8 672.6C519.3 667.0 524.2 667.3 522.2 663.8C520.2 660.3 520.8 653.5 520.5 651.5L520.5 651.5C517.3 649.1 505.8 640.9 501.1 637.4C496.4 633.9 493.8 631.6 492.3 630.4Z" fill="#959595"/>
<path d="M499.4 612.8C498.8 606.9 497.5 585.4 495.8 577.6C494.1 569.8 490.8 570.7 489.0 566.0C487.2 561.3 485.5 554.6 485.3 549.6C485.1 544.6 485.5 540.0 488.0 536.0C490.5 532.0 495.2 529.0 500.1 525.4C505.1 521.8 510.6 517.2 517.7 514.1C524.8 511.0 532.4 509.4 542.9 506.5C553.4 503.6 570.1 499.2 580.6 496.5C591.1 493.8 596.9 492.4 605.7 490.2C614.5 488.0 626.9 485.2 633.4 483.3C639.9 481.4 642.8 479.6 644.7 478.9L644.7 478.9C655.0 480.3 668.9 483.2 706.6 487.4C744.3 491.6 843.4 501.3 870.8 504.1L870.8 504.1C861.7 504.7 825.2 507.2 816.1 507.8L816.1 507.8C802.5 510.8 756.7 519.5 734.4 525.8C712.1 532.1 694.4 539.7 682.1 545.4C669.9 551.1 665.2 554.1 660.9 560.1C656.5 566.1 657.1 575.6 656.0 581.3C654.9 587.0 654.6 592.2 654.3 594.4L654.3 594.4C654.6 598.7 653.4 609.3 656.0 620.0C658.6 630.7 663.2 652.6 670.0 658.6C676.8 664.6 682.4 656.5 696.5 655.9C710.6 655.3 744.8 655.1 754.5 655.0L754.5 655.0C754.0 659.0 752.3 674.3 751.6 679.3C750.9 684.3 750.4 684.0 750.2 684.9L750.2 684.9C745.2 685.4 763.0 697.7 720.0 687.7C677.0 677.7 530.2 635.5 492.3 625.1Z" fill="url(#ghood)"/>
<path d="M816.1 507.8C802.5 510.8 756.7 519.5 734.4 525.8C712.1 532.1 694.4 539.7 682.1 545.4C669.9 551.1 665.2 554.1 660.9 560.1C656.5 566.1 657.1 575.6 656.0 581.3C654.9 587.0 654.6 592.2 654.3 594.4L654.3 594.4C654.6 598.7 653.4 609.3 656.0 620.0C658.6 630.7 663.2 652.6 670.0 658.6C676.8 664.6 682.4 656.5 696.5 655.9C710.6 655.3 744.8 655.1 754.5 655.0L754.5 655.0C755.0 654.8 755.2 657.4 757.6 653.9C760.0 650.4 763.9 640.1 768.7 634.0C773.5 627.9 779.7 622.1 786.3 617.5C792.9 612.9 800.2 609.2 808.3 606.5C816.4 603.8 828.0 601.4 834.8 601.0C841.5 600.6 846.5 603.7 848.8 604.2L848.8 604.2C850.2 600.9 853.3 596.3 857.0 584.6C860.7 572.9 867.9 547.2 870.9 533.9C873.9 520.5 874.3 509.4 875.0 504.5Z" fill="url(#gfend)"/>
<path d="M898.0 393.2C908.3 392.6 931.1 391.3 960.0 389.5C988.9 387.7 1052.9 383.6 1071.5 382.4L1071.5 382.4C1071.7 382.8 1070.8 380.8 1072.6 385.0C1074.4 389.2 1078.8 398.8 1082.6 407.6C1086.3 416.4 1091.3 428.9 1095.1 437.7C1098.8 446.5 1101.8 453.1 1105.1 460.2C1108.4 467.3 1112.3 473.6 1115.2 480.3C1118.1 487.0 1121.0 494.5 1122.7 500.3C1124.4 506.1 1124.4 510.0 1125.2 515.4C1126.0 520.8 1127.3 527.0 1127.7 532.9C1128.1 538.8 1127.7 547.6 1127.7 550.5L1127.7 550.5C1126.9 548.0 1125.2 539.4 1122.7 535.4C1120.2 531.4 1116.5 527.0 1112.7 526.6C1108.9 526.2 1104.3 529.8 1100.1 532.9C1095.9 536.0 1091.3 539.1 1087.6 545.4C1083.8 551.7 1080.1 561.7 1077.6 570.5C1075.1 579.3 1073.7 592.1 1072.6 598.0C1071.5 603.9 1071.4 604.7 1071.2 606.0L1071.2 606.0C1038.5 618.1 907.9 666.4 875.3 678.5L875.3 678.5C875.1 677.3 874.7 675.2 874.4 671.5C874.1 667.8 873.9 661.3 873.3 656.0C872.7 650.7 872.3 645.1 871.0 639.6C869.7 634.1 868.0 628.0 865.6 623.0C863.2 618.0 859.6 612.9 856.8 609.8C854.0 606.7 850.1 605.1 848.8 604.2L848.8 604.2C850.2 600.9 853.3 596.3 857.0 584.6C860.7 572.9 867.9 547.2 870.9 533.9C873.9 520.5 873.5 510.7 875.0 504.5C876.5 498.3 875.3 515.3 880.0 496.9C884.7 478.5 899.5 411.2 903.4 394.1Z" fill="url(#gside)"/>
<path d="M699.4 390.3C699.5 389.3 698.2 386.4 700.0 384.5C701.8 382.6 705.8 381.2 710.4 379.0C715.0 376.8 718.5 373.9 727.7 371.4C736.9 368.9 750.8 365.9 765.4 363.8C780.0 361.7 794.7 360.1 815.6 358.8C836.5 357.6 865.9 356.6 891.0 356.3C916.1 356.0 945.5 356.5 966.4 357.1C987.3 357.7 1002.0 358.4 1016.6 360.0C1031.2 361.6 1046.1 364.2 1054.3 366.4C1062.5 368.6 1063.5 370.9 1066.0 373.0C1068.5 375.1 1068.7 377.4 1069.6 379.0C1070.5 380.6 1071.2 381.8 1071.5 382.4L1071.5 382.4C1052.9 383.6 988.8 387.7 960.0 389.5C931.2 391.3 908.9 392.6 898.7 393.2L898.7 393.2C882.2 391.2 833.1 382.8 800.0 381.5C766.9 380.2 716.7 384.6 700.0 385.2L700.0 385.2C699.9 386.1 699.5 389.4 699.4 390.3Z" fill="url(#groof)"/>
<path d="M651.0 471.3C655.9 462.8 672.1 433.6 680.2 420.1C688.3 406.6 696.2 395.3 699.4 390.3L699.4 390.3C699.5 389.4 699.9 386.1 700.0 385.2L700.0 385.2C716.7 384.6 766.9 380.2 800.0 381.5C833.1 382.8 882.2 391.2 898.7 393.2L898.0 393.2C898.9 393.4 902.5 394.0 903.4 394.1L903.4 394.1C899.5 411.2 884.7 478.5 880.0 496.9C875.3 515.3 875.8 503.2 875.0 504.5L875.0 504.5C874.3 504.4 871.5 504.2 870.8 504.1L870.8 504.1C843.4 501.3 744.0 491.6 706.6 487.4C669.2 483.2 656.3 480.2 646.3 478.8Z" fill="#a6a6a6"/>
<path d="M656.0 476.0C655.6 475.6 653.8 474.7 653.5 473.8C653.2 472.9 654.3 471.1 654.5 470.5L654.5 470.5C661.4 458.2 689.1 409.2 696.0 397.0L696.0 397.0C696.4 396.6 697.6 394.9 698.6 394.3C699.6 393.7 701.4 393.7 702.0 393.6L702.0 393.6C718.3 393.2 770.0 390.2 800.0 391.3C830.0 392.4 868.3 398.6 882.0 400.0L882.0 400.0C882.8 400.2 885.6 400.6 886.5 401.5C887.4 402.4 887.3 404.8 887.5 405.5L887.5 405.5C884.5 419.4 872.5 475.1 869.5 489.0L869.5 489.0C869.2 489.9 868.8 493.5 867.5 494.5C866.2 495.5 862.9 494.9 862.0 495.0L862.0 495.0C845.0 493.6 793.7 489.6 760.0 486.5C726.3 483.4 676.7 478.2 660.0 476.5Z" fill="url(#gglass)" stroke="#7a7a7a" stroke-width="0.9"/>
<path d="M702 385Q790 376 898.7 393L1070 380" stroke="#505050" stroke-width="1.2" fill="none"/>
<path d="M700.5 389.5Q720 386.5 800 387L895 396.5M651 477.5L699 391M873 503.5L892 400" stroke="#7a7a7a" stroke-width="0.7" fill="none"/>
<path d="M651.5 480L871 505.5" stroke="#8a8a8a" stroke-width="0.8" fill="none"/>
<path d="M907.0 401.3L995.4 395.9L1003.5 473.4L884.5 493.3Z" fill="#8a8a8a" stroke="#555" stroke-width="0.8"/>
<path d="M910.0 404.5C923.7 403.7 978.2 400.2 992.0 399.5C1005.8 398.8 992.8 399.9 993.0 400.0L993.0 400.0C994.2 411.7 998.8 458.3 1000.0 470.0L1000.0 470.0C981.4 473.2 907.1 485.8 888.5 489.0L888.5 489.0C892.1 474.9 906.4 418.6 910.0 404.5Z" fill="url(#gwin)" stroke="#4a4a4a" stroke-width="0.8"/>
<path d="M1006.2 393.2L1066.6 390.5L1092.8 462.6L1015.2 475.2Z" fill="#8a8a8a" stroke="#555" stroke-width="0.8"/>
<path d="M1009.5 397.0L1064.0 394.5L1088.5 459.5L1018.0 471.5Z" fill="url(#gwin)" stroke="#4a4a4a" stroke-width="0.8"/>
<path d="M957.5 402.2L965.6 477.9" stroke="#3c3c3c" stroke-width="0.9"/>
<path d="M762.0 682.6C762.9 680.0 764.7 673.3 767.5 667.0C770.3 660.7 773.1 652.0 778.6 645.0C784.1 638.0 792.4 630.8 800.6 625.3C808.8 619.8 822.1 614.4 828.0 612.0C833.9 609.6 834.7 611.2 836.0 611.0L836.0 611.0C836.5 617.2 838.7 642.2 839.2 648.4L839.2 648.4C830.4 651.2 795.1 662.6 786.3 665.5Z" fill="#6b6b6b"/>
<path d="M830.0 611.5C832.5 611.2 840.4 609.3 844.7 609.8C849.0 610.2 852.8 611.4 855.7 614.2C858.6 617.0 860.3 621.6 862.3 626.4C864.3 631.2 866.1 637.3 867.8 642.9C869.4 648.5 871.5 657.1 872.2 660.0L872.2 660.0C867.7 658.7 850.5 653.9 845.0 652.0C839.5 650.1 840.2 649.0 839.2 648.4L839.2 648.4C838.7 645.3 837.5 636.1 836.0 630.0C834.5 623.9 831.0 614.6 830.0 611.5Z" fill="#9c9c9c"/>
<path d="M786.3 665.5L839.2 648.4L872.2 655.0L875.5 677.0L867.8 686.4Z" fill="#b2b4b4"/>
<path d="M751.0 682.6C752.1 677.8 754.6 662.0 757.6 653.9C760.6 645.8 763.9 640.1 768.7 634.0C773.5 627.9 779.7 622.1 786.3 617.5C792.9 612.9 800.2 609.2 808.3 606.5C816.4 603.8 828.2 601.5 834.8 601.0C841.4 600.5 844.3 601.7 848.0 603.2C851.7 604.7 853.9 606.5 856.8 609.8C859.7 613.1 863.2 618.0 865.6 623.0C868.0 628.0 869.7 634.1 871.0 639.6C872.3 645.1 872.7 650.7 873.3 656.0C873.9 661.3 874.1 667.8 874.4 671.5C874.7 675.2 875.1 677.3 875.3 678.5L875.3 678.5C874.8 676.6 873.5 672.9 872.2 667.0C871.0 661.1 869.4 649.7 867.8 642.9C866.1 636.1 864.3 631.2 862.3 626.4C860.3 621.6 858.6 617.0 855.7 614.2C852.8 611.4 849.3 610.2 844.7 609.8C840.1 609.4 835.4 609.4 828.0 612.0C820.6 614.6 808.8 619.8 800.6 625.3C792.4 630.8 784.1 638.0 778.6 645.0C773.1 652.0 770.3 660.7 767.5 667.0C764.7 673.3 762.9 680.0 762.0 682.6Z" fill="#b0b0b0" stroke="#5a5a5a" stroke-width="0.6"/>
<path d="M1082.6 570.5C1084.7 566.3 1090.9 551.2 1095.1 545.4C1099.3 539.5 1104.4 536.6 1107.6 535.4C1110.8 534.2 1111.6 536.2 1114.0 538.0C1116.4 539.8 1119.7 543.9 1122.0 546.0C1124.3 548.1 1126.3 547.9 1127.7 550.5C1129.1 553.1 1129.8 559.8 1130.2 561.7L1130.2 561.7C1126.0 564.0 1114.1 569.8 1105.1 575.5C1096.1 581.2 1080.8 592.6 1076.0 596.0Z" fill="#727272"/>
<path d="M1071.2 606.0C1071.4 604.7 1071.5 603.9 1072.6 598.0C1073.7 592.1 1075.1 579.3 1077.6 570.5C1080.1 561.7 1083.8 551.7 1087.6 545.4C1091.3 539.1 1095.9 536.0 1100.1 532.9C1104.3 529.8 1108.9 526.2 1112.7 526.6C1116.5 527.0 1120.2 531.4 1122.7 535.4C1125.2 539.4 1126.9 548.0 1127.7 550.5L1127.7 550.5C1126.8 549.8 1124.3 548.1 1122.0 546.0C1119.7 543.9 1116.4 539.8 1114.0 538.0C1111.6 536.2 1110.8 534.2 1107.6 535.4C1104.4 536.6 1099.3 539.5 1095.1 545.4C1090.9 551.2 1085.8 562.1 1082.6 570.5C1079.4 578.9 1077.3 590.1 1076.0 596.0C1074.7 601.9 1074.8 604.3 1074.5 606.0Z" fill="#bdbdbd" stroke="#666" stroke-width="0.6"/>
<path d="M1128 540L1130.5 548.5L1134 550.5L1136.5 560.5L1131 561.5Z" fill="#b8b8b8" stroke="#666" stroke-width="0.5"/>
<path d="M1103 554L1112 552L1108 557Z" fill="#d0d0d0"/>
<path d="M884.6 661.2L1071.2 600.2L1071.2 606.0L875.3 678.5L874.4 671.5Z" fill="#7a7a7a"/>
<path d="M884.6 661.2L1071.2 600.2M880 670L1071.2 603" stroke="#5c5c5c" stroke-width="0.8"/>
<path d="M520.5 651.5C520.8 653.5 520.2 660.3 522.2 663.8C524.2 667.3 519.3 667.0 532.8 672.6C546.3 678.2 582.7 690.5 603.2 697.3C623.7 704.0 640.5 708.7 656.0 713.1C671.5 717.5 689.8 721.9 696.5 723.7L696.5 723.7C696.9 722.8 699.4 721.9 699.1 718.4C698.8 714.9 695.4 705.2 694.7 702.6L694.7 702.6C682.4 699.1 644.8 688.9 620.8 681.4C596.8 673.9 567.1 662.7 550.4 657.7C533.7 652.7 525.5 652.5 520.5 651.5Z" fill="#a0a0a0" stroke="#6a6a6a" stroke-width="0.6"/>
<path d="M492.3 625.1C496.1 626.6 499.7 628.3 515.2 633.9C530.8 639.5 562.1 651.5 585.6 658.6C609.1 665.7 629.9 671.4 656.0 676.2C682.1 681.0 727.8 685.7 742.2 687.6L742.2 687.6C742.5 688.0 743.9 688.3 744.0 690.2C744.1 692.1 743.4 697.2 743.1 699.0C742.8 700.8 742.4 700.5 742.2 700.8L742.2 700.8C733.7 700.5 711.4 702.2 691.2 699.0C671.0 695.8 644.3 688.3 620.8 681.4C597.3 674.5 570.3 665.0 550.4 657.7C530.5 650.4 510.8 642.0 501.1 637.4C491.4 632.8 493.8 631.6 492.3 630.4Z" fill="#b2b2b2" stroke="#5a5a5a" stroke-width="0.7"/>
<path d="M496 628Q600 662 740 691" stroke="#c4c4c4" stroke-width="2.2" fill="none"/>
<clipPath id="gclip"><path d="M521.4 626.9C521.8 618.7 522.6 586.2 524.0 577.6C525.4 569.0 529.0 575.9 530.0 575.5L530.0 575.5C539.3 577.6 567.9 583.9 585.6 588.0C603.3 592.1 624.9 596.7 636.0 600.0C647.1 603.3 647.8 603.3 652.0 608.0C656.2 612.7 658.9 617.8 661.0 628.0C663.1 638.2 664.2 662.2 664.8 669.1L664.8 669.1C640.9 662.1 545.3 633.9 521.4 626.9Z"/></clipPath>
<path d="M521.4 626.9C521.8 618.7 522.6 586.2 524.0 577.6C525.4 569.0 529.0 575.9 530.0 575.5L530.0 575.5C539.3 577.6 567.9 583.9 585.6 588.0C603.3 592.1 624.9 596.7 636.0 600.0C647.1 603.3 647.8 603.3 652.0 608.0C656.2 612.7 658.9 617.8 661.0 628.0C663.1 638.2 664.2 662.2 664.8 669.1L664.8 669.1C640.9 662.1 545.3 633.9 521.4 626.9Z" fill="#666666"/>
<path d="M515 579.0L690 614.8M515 585.2L690 622.8M515 591.3L690 630.7M515 597.5L690 638.7M515 603.7L690 646.6M515 609.9L690 654.6M515 616.1L690 662.5M515 622.3L690 670.4" stroke="#b0b0b0" stroke-width="4.6" clip-path="url(#gclip)"/>
<path d="M518.7 623.4C519.0 616.4 518.7 589.6 520.5 581.1C522.3 572.6 518.4 571.7 529.3 572.3C540.1 572.9 567.4 580.5 585.6 584.6C603.8 588.7 626.7 593.5 638.4 597.0C650.1 600.5 651.6 600.8 656.0 605.8C660.4 610.8 662.5 618.1 664.8 626.9C667.1 635.7 668.2 651.0 670.0 658.6C671.8 666.2 671.3 669.5 675.4 672.6C679.5 675.7 691.5 676.3 694.7 677.0" stroke="#5e5e5e" stroke-width="4" fill="none" stroke-linecap="round"/>
<path d="M518.7 623.4C519.0 616.4 518.7 589.6 520.5 581.1C522.3 572.6 518.4 571.7 529.3 572.3C540.1 572.9 567.4 580.5 585.6 584.6C603.8 588.7 626.7 593.5 638.4 597.0C650.1 600.5 651.6 600.8 656.0 605.8C660.4 610.8 662.5 618.1 664.8 626.9C667.1 635.7 668.2 651.0 670.0 658.6C671.8 666.2 671.3 669.5 675.4 672.6C679.5 675.7 691.5 676.3 694.7 677.0" stroke="#b4b4b4" stroke-width="2.2" fill="none" stroke-linecap="round"/>
<path d="M548.4 580L550 637" stroke="#6a6a6a" stroke-width="2.4"/>
<path d="M548.4 580L550 637" stroke="#b0b0b0" stroke-width="1"/>
<ellipse cx="504" cy="554" rx="17.5" ry="27" transform="rotate(-10 504 554)" fill="url(#grim)" stroke="#4e4e4e" stroke-width="0.9"/>
<ellipse cx="500.3" cy="554.9" rx="14.3" ry="24.8" fill="url(#glamp)" stroke="#666" stroke-width="0.8"/>
<ellipse cx="683.7" cy="591.1" rx="24.5" ry="33.5" transform="rotate(-14 683.7 591.1)" fill="url(#grim)" stroke="#4e4e4e" stroke-width="0.9"/>
<ellipse cx="679" cy="592.8" rx="20" ry="29.4" transform="rotate(-10 679 592.8)" fill="url(#glamp)" stroke="#555" stroke-width="0.9"/>
<ellipse cx="507.3" cy="607.5" rx="7" ry="11" fill="url(#glamp)" stroke="#666" stroke-width="0.7"/>
<ellipse cx="685.9" cy="655.9" rx="9.5" ry="13.5" fill="url(#glamp)" stroke="#666" stroke-width="0.7"/>
<path d="M875 496.3Q872 540 857 584.6L848.8 604.2" stroke="#b4b4b4" stroke-width="1.4" fill="none"/>
<path d="M875 509Q885 540 884.6 649.7L886.9 654.3L1016 617.5Q1023 605 1022.8 560Q1021 520 1009 474" stroke="#4a4a4a" stroke-width="0.9" fill="none"/>
<path d="M878 544L910 537M879 635L911 627" stroke="#505050" stroke-width="4.8" stroke-linecap="round"/>
<path d="M878 543.6L910 536.6M879 634.6L911 626.6" stroke="#b0b0b0" stroke-width="3.2" stroke-linecap="round"/>
<path d="M887 537.5V546M887.5 628V637" stroke="#6a6a6a" stroke-width="0.8"/>
<path d="M704.4 488Q620 515 590 535Q579 550 578.2 578.2" stroke="#8e8e8e" stroke-width="1.6" fill="none"/>
<path d="M702 487.5Q618 514 588 534Q577 549 576.4 578" stroke="#b4b4b4" stroke-width="1.1" fill="none"/>
<path d="M634.6 484.5Q580 500 536.6 520.3Q524 530 523.6 569" stroke="#6a6a6a" stroke-width="0.9" fill="none"/>
<path d="M816.1 507.8Q700 530 670 552Q656 565 654.3 594.4" stroke="#666" stroke-width="0.9" fill="none"/>
<path d="M696.5 655.9L754.5 655" stroke="#888" stroke-width="0.8"/>
</g>
<g id="cursor">
<circle cx="863.4" cy="655" r="10.2" stroke="#ffffff" stroke-width="1.5" fill="none" stroke-dasharray="3.2 2.9"/>
<circle cx="863.4" cy="655" r="10.2" stroke="#e03030" stroke-width="1.5" fill="none" stroke-dasharray="2.9 3.2" stroke-dashoffset="-3.2"/>
<path d="M863.4 636.3V646.5M863.4 662V674.9M849.1 651.7L856 653.3M870.5 656.6L877.7 658.3M851.3 659.4L856.5 657.4M870 652.8L875.5 651.2" stroke="#111" stroke-width="1.1"/>
</g>
</svg>
<div class="a" style="left:0;top:0;width:1584px;height:25px;background:#424242"></div>
<div class="a" style="left:0;top:25px;width:1584px;height:25px;background:#3b3b3b"></div>
</div>
<div class="btn" style="left:9px;top:32px;width:30px;height:18px"></div>
<svg class="a" style="left:0;top:0" width="45" height="55" viewBox="0 0 45 55">
<circle cx="23.5" cy="37.5" r="3.5" fill="#d6d6d6"/>
<path d="M21.6 36.6Q22 35.3 23.3 35.1" stroke="#2c2c2c" stroke-width="0.7" fill="none"/>
<path d="M14 40.4H19.8M13 44.5H26.9M17.4 37.9L15.5 47.9M23.5 42.3L24.4 47.9" stroke="#c8c8c8" stroke-width="1.05" fill="none"/>
</svg>
<svg class="a" style="left:29px;top:38px" width="10" height="8" viewBox="0 0 10 8"><path d="M1.5 2.2L5 5.5L8.5 2.2" stroke="#d8d8d8" stroke-width="1.3" fill="none"/></svg>
<svg class="a" style="left:0;top:0" width="200" height="60" viewBox="0 0 200 60"><path d="M52.6 33.800000000000004V32.0Q52.6 30.6 54.0 30.6H55.800000000000004M70.39999999999999 30.6H72.19999999999999Q73.6 30.6 73.6 32.0V33.800000000000004M73.6 47.8V49.6Q73.6 51 72.19999999999999 51H70.39999999999999M55.800000000000004 51H54.0Q52.6 51 52.6 49.6V47.8M58.67 30.6H61.67M58.67 51H61.67M64.53 30.6H67.53M64.53 51H67.53M52.6 36.47V39.47M73.6 36.47V39.47M52.6 42.13V45.13M73.6 42.13V45.13" stroke="#f5a623" stroke-width="1.25" fill="none" stroke-linecap="butt"/><path d="M59.8 35.5V46.6L62 44L67.9 43.1Z" fill="#dedede"/></svg>
<div class="a" style="left:89px;top:32px;width:94px;height:18px;border-radius:4px;overflow:hidden;background:#545454"><div class="a" style="left:0;top:0;width:18px;height:18px;background:#4772b3"></div><div class="a" style="left:18px;top:0;width:1px;height:18px;background:#3e3e3e"></div><div class="a" style="left:37px;top:0;width:1px;height:18px;background:#3e3e3e"></div><div class="a" style="left:56px;top:0;width:1px;height:18px;background:#3e3e3e"></div><div class="a" style="left:75px;top:0;width:1px;height:18px;background:#3e3e3e"></div></div>
<svg class="a" style="left:0;top:0" width="200" height="60" viewBox="0 0 200 60"><path d="M91.2 36.800000000000004V35.400000000000006Q91.2 34.2 92.4 34.2H93.8M102.30000000000001 34.2H103.7Q104.9 34.2 104.9 35.400000000000006V36.800000000000004M104.9 45.1V46.5Q104.9 47.7 103.7 47.7H102.30000000000001M93.8 47.7H92.4Q91.2 47.7 91.2 46.5V45.1M95.30 34.2H97.30M95.30 47.7H97.30M98.80 34.2H100.80M98.80 47.7H100.80M91.2 38.23V40.23M104.9 38.23V40.23M91.2 41.67V43.67M104.9 41.67V43.67" stroke="#ffffff" stroke-width="1.2" fill="none" stroke-linecap="butt"/><path d="M110.1 38H114.4V34H123.9V43.6H119.9V47.9H110.1Z" fill="#c8c8c8"/><path d="M129.4 40.400000000000006V39.2Q129.4 38.2 130.4 38.2H131.6M136.60000000000002 38.2H137.8Q138.8 38.2 138.8 39.2V40.400000000000006M138.8 45.3V46.5Q138.8 47.5 137.8 47.5H136.60000000000002M131.6 47.5H130.4Q129.4 47.5 129.4 46.5V45.3M133.20 38.2H135.00M133.20 47.5H135.00M129.4 41.95V43.75M138.8 41.95V43.75" stroke="#e8e8e8" stroke-width="1.1" fill="none" stroke-linecap="butt"/><path d="M133.1 34H142.9V44H138V38.5H133.1Z" fill="#c8c8c8"/><path d="M148 38.1H152.1V34H162V44H157.8V47.9H148Z M152.1 38.1V44H157.8V38.1Z" fill="#c8c8c8" fill-rule="evenodd"/><path d="M171 36.400000000000006V35.2Q171 34.2 172 34.2H173.2M178.5 34.2H179.7Q180.7 34.2 180.7 35.2V36.400000000000006M180.7 41.599999999999994V42.8Q180.7 43.8 179.7 43.8H178.5M173.2 43.8H172Q171 43.8 171 42.8V41.599999999999994M174.95 34.2H176.75M174.95 43.8H176.75M171 38.10V39.90M180.7 38.10V39.90" stroke="#e8e8e8" stroke-width="1.1" fill="none" stroke-linecap="butt"/><path d="M167.2 40.400000000000006V39.2Q167.2 38.2 168.2 38.2H169.39999999999998M174.60000000000002 38.2H175.8Q176.8 38.2 176.8 39.2V40.400000000000006M176.8 45.3V46.5Q176.8 47.5 175.8 47.5H174.60000000000002M169.39999999999998 47.5H168.2Q167.2 47.5 167.2 46.5V45.3M171.10 38.2H172.90M171.10 47.5H172.90M167.2 41.95V43.75M176.8 41.95V43.75" stroke="#e8e8e8" stroke-width="1.1" fill="none" stroke-linecap="butt"/><rect x="171" y="38.1" width="6" height="5.9" fill="#c8c8c8"/></svg>
<div class="btn" style="left:668px;top:32px;width:78px;height:18px"></div>
<svg class="a" style="left:671px;top:33px" width="16" height="16" viewBox="0 0 16 16">
<path d="M2.5 2V13.5H14M2.5 13.5L11 5.5M1 3.5L2.5 1.5L4 3.5M12.5 12L14 13.5L12.5 15M8.5 5.2H11.2V8" stroke="#d0d0d0" stroke-width="1.1" fill="none"/>
<circle cx="2.5" cy="13.5" r="1.3" stroke="#d0d0d0" stroke-width="1" fill="#2c2c2c"/>
</svg>
<div class="t" style="left:693.5px;top:34.7px;">Global</div>
<svg class="a" style="left:735px;top:38px" width="10" height="8" viewBox="0 0 10 8"><path d="M1.5 2.2L5 5.5L8.5 2.2" stroke="#d8d8d8" stroke-width="1.3" fill="none"/></svg>
<div class="btn" style="left:753.3px;top:32.2px;width:29.7px;height:17.5px"></div>
<div class="btn" style="left:790px;top:32.2px;width:49.5px;height:17.5px"></div>
<div class="a" style="left:790px;top:32.2px;width:18.4px;height:17.5px;background:#545454;border-radius:4px 0 0 4px"></div>
<div class="btn" style="left:847px;top:32.2px;width:49.6px;height:17.5px"></div>
<div class="a" style="left:847px;top:32.2px;width:18px;height:17.5px;background:#545454;border-radius:4px 0 0 4px"></div>
<svg class="a" style="left:740px;top:26px" width="170" height="28" viewBox="740 26 170 28">
<circle cx="761.3" cy="43.6" r="4.1" stroke="#d8d8d8" stroke-width="1.1" fill="none"/><circle cx="761.3" cy="43.6" r="1.6" fill="#d8d8d8"/>
<path d="M763.2 36.6A4.2 4.2 0 1 1 768.4 42.2" stroke="#d8d8d8" stroke-width="1.1" fill="none"/><circle cx="766.5" cy="38.4" r="1.5" fill="#d8d8d8"/>
<path d="M774.2 40L777.4 43.2L780.6 40M831.2 40L834.4 43.2L837.6 40" stroke="#e0e0e0" stroke-width="1.2" fill="none"/>
<path d="M793 39.2L795.8 36.4A5.6 5.6 0 0 1 803.8 44.4L800.7 47.5L798.5 45.3L801.7 42.2A2.5 2.5 0 0 0 798 38.6L795.2 41.4Z" stroke="#a8a8a8" stroke-width="1" fill="none" stroke-linejoin="round"/>
<path d="M811.3 43.6H824M811.3 39.8V46.9M824 39.8V46.9M816 41.5V45.5M819.7 41.5V45.5" stroke="#d8d8d8" stroke-width="1.1"/>
<rect x="821.2" y="34.1" width="3.8" height="3.8" fill="#d8d8d8"/>
<circle cx="856" cy="41.2" r="7" stroke="#6e6e6e" stroke-width="1" fill="none"/><circle cx="856" cy="41.2" r="2.1" fill="#b8b8b8"/>
<path d="M869.7 46.9Q872.5 46.5 874.2 40Q875.5 35.1 876.8 35.1Q878.1 35.1 879.4 40Q881.1 46.5 883.8 46.9" stroke="#a0a0a0" stroke-width="1.05" fill="none"/>
<path d="M888.2 40L891.4 43.2L894.6 40" stroke="#555" stroke-width="1.1" fill="none"/>
</svg>
<div class="btn" style="left:1516px;top:32px;width:61px;height:18px"></div>
<div class="t" style="left:1523.5px;top:34.7px;">Options</div>
<svg class="a" style="left:1565.5px;top:38px" width="10" height="8" viewBox="0 0 10 8"><path d="M1.5 2.2L5 5.5L8.5 2.2" stroke="#d8d8d8" stroke-width="1.3" fill="none"/></svg>
<div class="btn" style="left:10px;top:57px;width:108.5px;height:18px"></div>
<svg class="a" style="left:13px;top:57px" width="18" height="18" viewBox="0 0 18 18">
<path d="M2 5V2H5M13 2H16V5M16 13V16H13M5 16H2V13" stroke="#d0d0d0" stroke-width="1" fill="none"/>
<rect x="4.8" y="4.8" width="8.4" height="8.4" fill="#dcdcdc"/>
</svg>
<div class="t" style="left:35.5px;top:59.7px;">Object Mode</div>
<svg class="a" style="left:107px;top:63px" width="10" height="8" viewBox="0 0 10 8"><path d="M1.5 2.2L5 5.5L8.5 2.2" stroke="#d8d8d8" stroke-width="1.3" fill="none"/></svg>
<div class="btn" style="left:125px;top:57px;width:38px;height:18px"></div>
<div class="t" style="left:131px;top:59.7px;">View</div>
<div class="btn" style="left:165px;top:57px;width:43px;height:18px"></div>
<div class="t" style="left:171px;top:59.7px;">Select</div>
<div class="btn" style="left:211px;top:57px;width:31px;height:18px"></div>
<div class="t" style="left:217px;top:59.7px;">Add</div>
<div class="btn" style="left:245px;top:57px;width:45px;height:18px"></div>
<div class="t" style="left:251px;top:59.7px;">Object</div>
<div class="btn" style="left:1330.3px;top:57px;width:29.6px;height:17.8px"></div>
<div class="btn" style="left:1367.2px;top:57px;width:37.8px;height:17.9px"></div>
<div class="a" style="left:1367.2px;top:57px;width:17.9px;height:17.9px;background:#4772b3;border-radius:4px 0 0 4px"></div>
<div class="btn" style="left:1412px;top:57px;width:37.7px;height:17.9px"></div>
<div class="a" style="left:1412px;top:57px;width:18.1px;height:17.9px;background:#4772b3;border-radius:4px 0 0 4px"></div>
<div class="tog" style="left:1457.5px;top:57.2px;width:17.2px;height:17.5px;border-radius:4px"></div>
<div class="a" style="left:1482.2px;top:56.8px;width:94.9px;height:18.2px;border-radius:4px;overflow:hidden;background:#2c2c2c"><div class="a" style="left:0;top:0;width:17.6px;height:18.2px;background:#545454"></div><div class="a" style="left:18.8px;top:0;width:18px;height:18.2px;background:#4772b3"></div><div class="a" style="left:38px;top:0;width:17.6px;height:18.2px;background:#545454"></div><div class="a" style="left:56.8px;top:0;width:18px;height:18.2px;background:#545454"></div></div>
<svg class="a" style="left:1320px;top:50px" width="271" height="30" viewBox="1320 50 271 30">
<path d="M1335 62.5Q1340.6 56.5 1346.1 62.5Q1340.6 68.5 1335 62.5Z" fill="#d6d6d6"/>
<circle cx="1340.6" cy="62.5" r="2.3" fill="#2c2c2c"/><circle cx="1340.6" cy="62.5" r="1.2" fill="#d6d6d6"/>
<path d="M1332 65.3L1340.1 68.6L1336.8 69.6L1335.5 73.1Z" fill="#d6d6d6"/>
<path d="M1351.2 65.2L1354.6 68.6L1358 65.2M1392.2 65.2L1395.5 68.6L1398.8 65.2M1436.9 65.2L1440.2 68.6L1443.5 65.2M1563.6 65.2L1567 68.6L1570.4 65.2" stroke="#e0e0e0" stroke-width="1.2" fill="none"/>
<path d="M1369 61.3Q1378.5 62 1380.8 73.1" stroke="#f2f2f2" stroke-width="1.1" fill="none"/>
<path d="M1372.3 69.5L1375.5 66.3M1376.8 65L1381.8 60" stroke="#f2f2f2" stroke-width="1.1"/>
<path d="M1378.5 59.4H1382.6V63.5" stroke="#f2f2f2" stroke-width="1.1" fill="none"/>
<circle cx="1371" cy="70.8" r="1.7" stroke="#f2f2f2" stroke-width="1" fill="none"/>
<circle cx="1423.1" cy="63.8" r="5" fill="#f4f4f4"/>
<path d="M1421.5 62.5L1422.6 63.6M1424 64.8L1423.6 66.6" stroke="#4772b3" stroke-width="0.7"/>
<path d="M1416.9 64.3A4.8 4.8 0 1 0 1422.7 71" stroke="#f4f4f4" stroke-width="1.1" fill="none"/>
<path d="M1463.3 61.3V59.1H1472.8V68.6H1471" stroke="#e8e8e8" stroke-width="1" fill="none"/>
<rect x="1459.4" y="62.4" width="10.2" height="10.3" stroke="#e8e8e8" stroke-width="1" fill="none"/>
<path d="M1463.2 64V66.5M1463.2 68V68.3H1464.2M1465.5 68.3H1467" stroke="#e8e8e8" stroke-width="0.9"/>
<circle cx="1491" cy="65.9" r="6.7" stroke="#d8d8d8" stroke-width="1" fill="none"/>
<path d="M1489.7 59.3V72.5M1484.5 63.4H1497.5M1484.5 68.5H1497.5" stroke="#d8d8d8" stroke-width="1"/>
<circle cx="1509.9" cy="65.9" r="7" fill="#ffffff"/>
<circle cx="1529" cy="65.9" r="6.7" stroke="#d8d8d8" stroke-width="1" fill="none"/>
<path d="M1529 59.2V65.9L1524.5 70.6A6.7 6.7 0 0 1 1529 59.2Z" fill="#c8c8c8"/>
<path d="M1529 65.9L1533.5 70.6M1531.5 70.8L1532.8 69.5M1533.6 69.6L1534.6 68.4" stroke="#d8d8d8" stroke-width="0.9"/>
<circle cx="1547.9" cy="65.9" r="6.7" stroke="#d8d8d8" stroke-width="1" fill="none"/>
<path d="M1544.2 63.5A4.6 4.6 0 0 1 1547.4 60.4" stroke="#d8d8d8" stroke-width="1.3" fill="none"/>
<path d="M1546 71.5L1547 70.3M1548.2 71.6L1549.3 70.3M1550.3 71L1551.3 69.6M1552 69.5L1552.9 68.2" stroke="#d8d8d8" stroke-width="0.9"/>
</svg>
<div class="t" style="left:67.6px;top:88.7px;color:#ececec;text-shadow:0 0 1.5px rgba(0,0,0,0.6);">User Perspective</div>
<div class="t" style="left:67.6px;top:107.0px;color:#ececec;text-shadow:0 0 1.5px rgba(0,0,0,0.6);">(121) Scene Collection | Llantas_Traseras</div>
<div class="tb" style="top:88px;height:67.5px"></div>
<div class="a" style="left:9px;top:88px;width:40px;height:33.3px;background:#4772b3;border-radius:5px 5px 0 0"></div>
<div class="tb" style="top:163px;height:137.5px"></div>
<div class="tb" style="top:308px;height:67.3px"></div>
<div class="a" style="left:9px;top:196.5px;width:40px;height:1px;background:#303030"></div>
<div class="a" style="left:9px;top:231.2px;width:40px;height:1px;background:#303030"></div>
<div class="a" style="left:9px;top:266px;width:40px;height:1px;background:#303030"></div>
<div class="a" style="left:9px;top:341.3px;width:40px;height:1px;background:#303030"></div>
<svg class="a" style="left:0;top:80px" width="60" height="300" viewBox="0 80 60 300"><path d="M17.3 97.5V95.7Q17.3 94.3 18.7 94.3H20.5M35.699999999999996 94.3H37.5Q38.9 94.3 38.9 95.7V97.5M38.9 112.39999999999999V114.19999999999999Q38.9 115.6 37.5 115.6H35.699999999999996M20.5 115.6H18.7Q17.3 115.6 17.3 114.19999999999999V112.39999999999999M23.57 94.3H26.57M23.57 115.6H26.57M29.63 94.3H32.63M29.63 115.6H32.63M17.3 100.47V103.47M38.9 100.47V103.47M17.3 106.43V109.43M38.9 106.43V109.43" stroke="#f5a623" stroke-width="1.3" fill="none" stroke-linecap="butt"/><path d="M24.9 99.7V110.2L26.8 108L32.4 106.8Z" fill="#e0e0e0"/>
<path d="M46.8 116.2V118.8H44.1Z" fill="#7f9ccc"/>
<circle cx="27.9" cy="138.8" r="11" stroke="#f0f0f0" stroke-width="1.5" fill="none"/>
<circle cx="27.9" cy="138.8" r="11" stroke="#a83838" stroke-width="1.6" fill="none" stroke-dasharray="4.3 4.34" stroke-dashoffset="2"/>
<path d="M27.9 132V136.9M27.9 141V145.9M20.8 138.8H25.7M30.2 138.8H35.1" stroke="#8f8f8f" stroke-width="1.5"/>
<path d="M27.9 168.3L24.8 172.5H31Z M27.9 191.6L24.8 187.4H31Z M16.3 179.9L20.5 176.8V183Z M39.6 179.9L35.4 176.8V183Z" fill="#dcdcdc"/>
<path d="M27.9 173.5V177M27.9 182.8V186.3M21.5 179.9H25M30.8 179.9H34.3" stroke="#dcdcdc" stroke-width="1.3"/>
<path d="M19.7 211.5A8.8 8.8 0 0 1 35.2 208.5M36.2 215.8A8.8 8.8 0 0 1 20.6 219.5" stroke="#dcdcdc" stroke-width="1.1" fill="none"/>
<path d="M16.3 213.2H22.2L19.2 217.5Z M33.5 214.8H39.5L36.5 210.3Z" fill="#dcdcdc"/>
<path d="M27.9 210.4L31.3 213.8L27.9 217.2L24.5 213.8Z" fill="#a8a8a8"/>
<path d="M21 244.5V241.4H35.7V256.6H29.5" stroke="#bdbdbd" stroke-width="1.1" fill="none"/>
<rect x="18.9" y="248.8" width="9" height="9.4" fill="#e6e6e6"/>
<path d="M29.3 247.8L33.2 243.9" stroke="#dcdcdc" stroke-width="1.3"/><path d="M34.5 242.4L33.6 246.8L30.2 243.4Z" fill="#dcdcdc"/>
<path d="M47.1 260V263.8H43Z" fill="#666"/>
<circle cx="27.9" cy="283.8" r="10" stroke="#dcdcdc" stroke-width="1.1" fill="none" stroke-dasharray="5.5 2.35" stroke-dashoffset="4"/>
<rect x="23.8" y="279.8" width="8.3" height="8.3" fill="#e6e6e6"/>
<path d="M27.9 273.5L25.5 276.6H30.3Z M27.9 294.1L25.5 291H30.3Z M17.6 283.8L20.7 281.4V286.2Z M38.2 283.8L35.1 281.4V286.2Z" fill="#dcdcdc"/>
<path d="M17.5 329.5L29.8 317.2L32.8 320.2L20.5 332.5L16.3 333.5Z" fill="#e6e6e6"/>
<path d="M27.9 319.1L30.9 322.1" stroke="#2b2b2b" stroke-width="0.6"/>
<path d="M17.4 332.4Q20 335 23.8 334Q27 333 31 329Q34.5 326.5 37 327.3Q39.5 328.5 40.7 332.3" stroke="#6fd3a0" stroke-width="1.3" fill="none"/>
<path d="M47.1 336V338.7H44.1Z" fill="#666"/>
<path d="M24.7 367.7V358.5A9.2 9.2 0 0 1 33.9 367.7Z" fill="#7ed9ac"/>
<path d="M24.7 355.4A12.3 12.3 0 0 1 37 367.7" stroke="#7ed9ac" stroke-width="1" fill="none"/>
<path d="M21 348V369.3H40" stroke="#e6e6e6" stroke-width="2.8" fill="none"/>
<path d="M18.9 347.9H24.3M22.5 351V352.8M22.5 355V356.8M22.5 359V360.8M22.5 363V364.8M26.5 367.8V366M29.5 367.8V366M32.5 367.8V366M35.5 367.8V366M38.5 367.8V366" stroke="#2b2b2b" stroke-width="0.8"/>
</svg>
<svg class="a" style="left:1500px;top:84px" width="80" height="90" viewBox="1500 84 80 90">
<circle cx="1511.3" cy="124.7" r="6.2" fill="#9b3a48"/>
<circle cx="1513" cy="132.9" r="6.2" fill="#8ad626"/>
<circle cx="1535.4" cy="160.8" r="6.4" fill="#3568a8"/>
<path d="M1535.2 128.6V104" stroke="#2f8cff" stroke-width="2"/>
<path d="M1535.2 128.6L1557 123.5" stroke="#5f8a22" stroke-width="2"/>
<circle cx="1557.3" cy="123.3" r="7.6" fill="#6a9326"/>
<path d="M1535.2 128.6L1558 132" stroke="#ff3352" stroke-width="2"/>
<circle cx="1558.7" cy="132" r="7.8" fill="#ff3352"/>
<circle cx="1534.6" cy="96.5" r="7.8" fill="#2f8cff"/>
<path d="M1531.5 92.5H1537.5L1531.5 100.5H1537.5" stroke="#10243d" stroke-width="1.1" fill="none"/>
<path d="M1555.5 128.5L1562 135.5M1562 128.5L1555.5 135.5" stroke="#6a1020" stroke-width="1.1"/>
<path d="M1554 117.5L1557.3 121.5L1560.5 117.5" stroke="#2c4010" stroke-width="1.1" fill="none"/>
</svg>
<div class="a" style="left:1577px;top:94px;width:10px;height:14px;background:#333;border-radius:4px 0 0 4px"></div>
<svg class="a" style="left:1577px;top:94px" width="8" height="14" viewBox="0 0 8 14"><path d="M6 3.5L2.5 7L6 10.5" stroke="#c8c8c8" stroke-width="1.1" fill="none"/></svg>
<div class="nav" style="left:1548.6px;top:170.4px"></div>
<div class="nav" style="left:1548.6px;top:200.3px"></div>
<div class="nav" style="left:1548.6px;top:230.9px"></div>
<div class="nav" style="left:1548.6px;top:261.5px"></div>
<svg class="a" style="left:1545px;top:168px" width="34" height="124" viewBox="1545 168 34 124">
<circle cx="1563.6" cy="182" r="5.6" fill="#dcdcdc"/>
<path d="M1563.6 179V185M1560.6 182H1566.6" stroke="#2e2e2e" stroke-width="1.1"/>
<path d="M1559.6 186L1555 190.8" stroke="#dcdcdc" stroke-width="1.9" stroke-linecap="round"/>
<path d="M1559.7 213V206.8M1563 213V204.3M1566.3 213.5V206.2M1569.1 215V210" stroke="#dcdcdc" stroke-width="2.3" stroke-linecap="round"/>
<path d="M1558.3 212H1570.3V216Q1570 222.3 1563.5 222.3Q1559.5 222.3 1557.5 219L1554.5 214.8Q1554.3 213.3 1556 213.6L1558.6 215.6Z" fill="#dcdcdc"/>
<circle cx="1557.4" cy="242.5" r="3.3" fill="#dcdcdc"/><circle cx="1564.7" cy="241.3" r="4.2" fill="#dcdcdc"/>
<circle cx="1557.4" cy="242.5" r="0.9" fill="#2e2e2e"/><circle cx="1564.7" cy="241.3" r="1.1" fill="#2e2e2e"/>
<rect x="1555.8" y="245.7" width="10.5" height="7.2" fill="#dcdcdc"/><path d="M1566.3 249.3L1570.2 246V253Z M1553.2 248.3H1555V251H1553.2Z" fill="#dcdcdc"/>
<path d="M1556.5 269.2H1568.2L1570.8 281.5H1553.9Z" stroke="#dcdcdc" stroke-width="1.2" fill="none" stroke-linejoin="round"/>
<path d="M1555.3 273.3H1569.1M1554.6 277.4H1569.9M1560.4 269.2L1559.5 281.5M1564.3 269.2L1565.2 281.5" stroke="#dcdcdc" stroke-width="1.1"/>
</svg>
</body></html>
